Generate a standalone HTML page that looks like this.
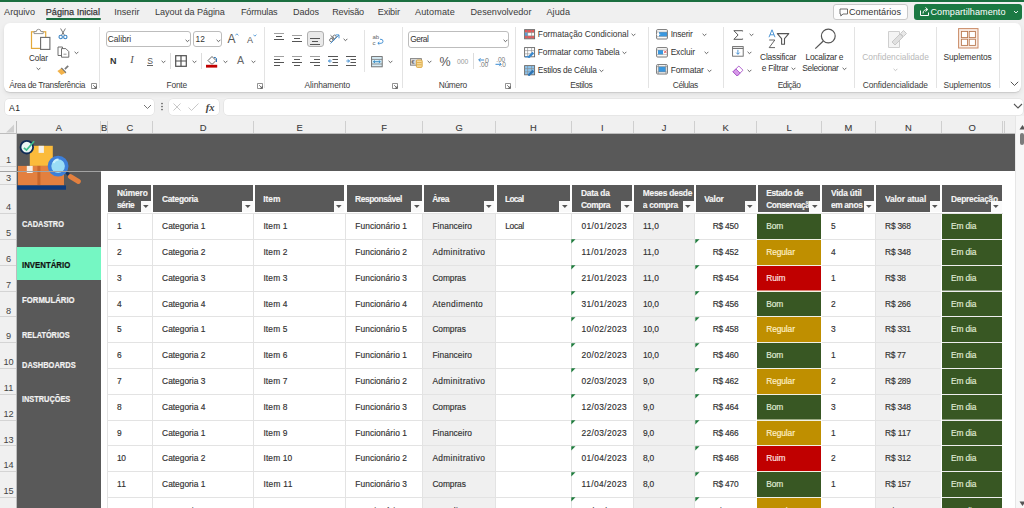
<!DOCTYPE html>
<html><head><meta charset="utf-8"><style>
html,body{margin:0;padding:0;}
body{width:1024px;height:508px;overflow:hidden;position:relative;background:#f0f0f0;font-family:"Liberation Sans", sans-serif;}
body>div,body>svg{position:absolute;}
</style></head><body>
<div style="left:0.00px;top:0.00px;width:1024.00px;height:1.70px;background:#1b6f40;"></div><div style="left:4.10px;top:7.00px;font-size:9.1px;line-height:10px;color:#3b3b3b;font-weight:normal;white-space:nowrap;letter-spacing:0.008px;">Arquivo</div><div style="left:45.80px;top:7.00px;font-size:9.1px;line-height:10px;color:#3b3b3b;font-weight:normal;white-space:nowrap;letter-spacing:0.004px;-webkit-text-stroke:0.25px #333;">Página Inicial</div><div style="left:114.20px;top:7.00px;font-size:9.1px;line-height:10px;color:#3b3b3b;font-weight:normal;white-space:nowrap;letter-spacing:0.000px;">Inserir</div><div style="left:155.00px;top:7.00px;font-size:9.1px;line-height:10px;color:#3b3b3b;font-weight:normal;white-space:nowrap;letter-spacing:-0.059px;">Layout da Página</div><div style="left:240.90px;top:7.00px;font-size:9.1px;line-height:10px;color:#3b3b3b;font-weight:normal;white-space:nowrap;letter-spacing:-0.164px;">Fórmulas</div><div style="left:292.90px;top:7.00px;font-size:9.1px;line-height:10px;color:#3b3b3b;font-weight:normal;white-space:nowrap;letter-spacing:-0.050px;">Dados</div><div style="left:332.20px;top:7.00px;font-size:9.1px;line-height:10px;color:#3b3b3b;font-weight:normal;white-space:nowrap;letter-spacing:-0.149px;">Revisão</div><div style="left:377.80px;top:7.00px;font-size:9.1px;line-height:10px;color:#3b3b3b;font-weight:normal;white-space:nowrap;letter-spacing:-0.110px;">Exibir</div><div style="left:415.00px;top:7.00px;font-size:9.1px;line-height:10px;color:#3b3b3b;font-weight:normal;white-space:nowrap;letter-spacing:0.122px;">Automate</div><div style="left:470.50px;top:7.00px;font-size:9.1px;line-height:10px;color:#3b3b3b;font-weight:normal;white-space:nowrap;letter-spacing:0.025px;">Desenvolvedor</div><div style="left:546.50px;top:7.00px;font-size:9.1px;line-height:10px;color:#3b3b3b;font-weight:normal;white-space:nowrap;letter-spacing:0.051px;">Ajuda</div><div style="left:45.80px;top:17.80px;width:55.00px;height:1.80px;background:#1b6f40;border-radius:1px;"></div><div style="left:832.50px;top:3.50px;width:75.00px;height:16.50px;background:#fdfdfd;border:1px solid #c9c9c9;border-radius:3px;box-sizing:border-box;"></div><svg style="left:838.50px;top:7.50px;" width="10" height="10" viewBox="0 0 10 10"><path d="M1 1h7.5v5h-4.5l-2.2 2v-2h-0.8z" fill="none" stroke="#555" stroke-width="0.85"/></svg><div style="left:849.00px;top:7.00px;font-size:9.1px;line-height:10px;color:#333;font-weight:normal;white-space:nowrap;letter-spacing:0.040px;">Comentários</div><div style="left:913.50px;top:3.50px;width:108.30px;height:16.50px;background:#1b7943;border-radius:3px;"></div><svg style="left:919.00px;top:6.00px;" width="11" height="11" viewBox="0 0 11 11"><path d="M1.5 4.5v5h8v-3" fill="none" stroke="#fff" stroke-width="1"/><path d="M4 7.5c0-3 2-4 4.5-4M6.5 1.5l2.3 2-2.3 2" fill="none" stroke="#fff" stroke-width="1"/></svg><div style="left:930.50px;top:7.00px;font-size:9.1px;line-height:10px;color:#fff;font-weight:normal;white-space:nowrap;letter-spacing:0.044px;">Compartilhamento</div><svg style="left:1012.50px;top:10.00px;" width="6" height="4" viewBox="0 0 6 4"><path d="M1 1l2 2 2-2" fill="none" stroke="#fff" stroke-width="0.9"/></svg><div style="left:4.20px;top:22.60px;width:1016.60px;height:69.10px;background:#ffffff;border-radius:6px;box-shadow:0 1px 1px rgba(0,0,0,0.10),0 2px 5px rgba(0,0,0,0.08);"></div><div style="left:98.70px;top:26.50px;width:1.00px;height:61.00px;background:#e3e3e3;"></div><div style="left:263.80px;top:26.50px;width:1.00px;height:61.00px;background:#e3e3e3;"></div><div style="left:402.00px;top:26.50px;width:1.00px;height:61.00px;background:#e3e3e3;"></div><div style="left:514.60px;top:26.50px;width:1.00px;height:61.00px;background:#e3e3e3;"></div><div style="left:648.30px;top:26.50px;width:1.00px;height:61.00px;background:#e3e3e3;"></div><div style="left:723.00px;top:26.50px;width:1.00px;height:61.00px;background:#e3e3e3;"></div><div style="left:854.00px;top:26.50px;width:1.00px;height:61.00px;background:#e3e3e3;"></div><div style="left:936.20px;top:26.50px;width:1.00px;height:61.00px;background:#e3e3e3;"></div><div style="left:999.00px;top:26.50px;width:1.00px;height:61.00px;background:#e3e3e3;"></div><div style="left:9.20px;top:80.00px;font-size:8.4px;line-height:10px;color:#3c3c3c;font-weight:normal;white-space:nowrap;letter-spacing:-0.310px;">Área de Transferência</div><div style="left:166.50px;top:80.00px;font-size:8.4px;line-height:10px;color:#3c3c3c;font-weight:normal;white-space:nowrap;letter-spacing:-0.191px;">Fonte</div><div style="left:304.60px;top:80.00px;font-size:8.4px;line-height:10px;color:#3c3c3c;font-weight:normal;white-space:nowrap;letter-spacing:-0.090px;">Alinhamento</div><div style="left:438.70px;top:80.00px;font-size:8.4px;line-height:10px;color:#3c3c3c;font-weight:normal;white-space:nowrap;letter-spacing:-0.272px;">Número</div><div style="left:570.30px;top:80.00px;font-size:8.4px;line-height:10px;color:#3c3c3c;font-weight:normal;white-space:nowrap;letter-spacing:-0.390px;">Estilos</div><div style="left:672.80px;top:80.00px;font-size:8.4px;line-height:10px;color:#3c3c3c;font-weight:normal;white-space:nowrap;letter-spacing:-0.419px;">Células</div><div style="left:777.70px;top:80.00px;font-size:8.4px;line-height:10px;color:#3c3c3c;font-weight:normal;white-space:nowrap;letter-spacing:-0.481px;">Edição</div><div style="left:862.70px;top:80.00px;font-size:8.4px;line-height:10px;color:#3c3c3c;font-weight:normal;white-space:nowrap;letter-spacing:-0.080px;">Confidencialidade</div><div style="left:943.50px;top:80.00px;font-size:8.4px;line-height:10px;color:#3c3c3c;font-weight:normal;white-space:nowrap;letter-spacing:-0.151px;">Suplementos</div><svg style="left:30.00px;top:28.00px;" width="21" height="22" viewBox="0 0 21 22">
      <rect x="1.5" y="3.8" width="14.2" height="16.6" fill="#fff" stroke="#e3a93a" stroke-width="1.2"/>
      <path d="M4 5.6v-2h2.3a2.3 2.3 0 0 1 4.6 0h2.3v2z" fill="#fff" stroke="#8a8a8a" stroke-width="0.9"/>
      <rect x="10.6" y="9.4" width="9.3" height="12" fill="#fff" stroke="#6a6a6a" stroke-width="1.1"/></svg><div style="left:29.10px;top:54.00px;font-size:8.2px;line-height:9px;color:#333;font-weight:normal;white-space:nowrap;letter-spacing:-0.175px;">Colar</div><svg style="left:36.00px;top:67.30px;" width="5" height="4" viewBox="0 0 5 4"><path d="M0.6 0.8l1.9 1.9 1.9-1.9" fill="none" stroke="#555" stroke-width="0.9"/></svg><svg style="left:58.00px;top:28.00px;" width="10" height="12" viewBox="0 0 10 12">
      <path d="M2.6 0.5l3.8 6.6M7.4 0.5l-3.8 6.6" stroke="#6b6b6b" stroke-width="0.9" fill="none"/>
      <circle cx="2.7" cy="9" r="1.7" fill="none" stroke="#3f86c4" stroke-width="1.1"/>
      <circle cx="7.3" cy="9" r="1.7" fill="none" stroke="#3f86c4" stroke-width="1.1"/></svg><svg style="left:56.80px;top:45.80px;" width="13" height="12" viewBox="0 0 13 12">
      <path d="M1 1h4.5v8.5H1z" fill="#fff" stroke="#606060" stroke-width="0.9"/>
      <path d="M4.5 2.6h4.3l3 3v5.6h-7.3z" fill="#fff" stroke="#606060" stroke-width="0.9"/>
      <path d="M6.5 8.2h3" stroke="#808080" stroke-width="0.8"/></svg><svg style="left:74.00px;top:50.50px;" width="5" height="4" viewBox="0 0 5 4"><path d="M0.6 0.8l1.9 1.9 1.9-1.9" fill="none" stroke="#555" stroke-width="0.9"/></svg><svg style="left:56.50px;top:63.50px;" width="13" height="12" viewBox="0 0 13 12">
      <path d="M7.3 4.6l3.3-3.3 1.2 1.2-3.3 3.3z" fill="#7a7a7a"/>
      <path d="M4.8 3.6l4.6 4.6-1.2 1.2-4.6-4.6z" fill="#707070"/>
      <path d="M4.2 4.6l4.2 4.2-4 2.2-4-4z" fill="#f2b24a"/></svg><svg style="left:91.00px;top:82.50px;" width="6" height="6" viewBox="0 0 6 6"><path d="M0.5 0.5h5v5h-5z" fill="none" stroke="#777" stroke-width="0.8"/><path d="M2.2 2.2l3 3M3 5.2h2.2V3" fill="none" stroke="#555" stroke-width="0.8"/></svg><div style="left:105.90px;top:31.00px;width:84.80px;height:16.40px;background:#fff;border:1px solid #bdbdbd;border-radius:3px;box-sizing:border-box;"></div><div style="left:107.80px;top:34.00px;font-size:8.4px;line-height:10px;color:#333;font-weight:normal;white-space:nowrap;letter-spacing:-0.069px;">Calibri</div><svg style="left:184.50px;top:38.50px;" width="5" height="4" viewBox="0 0 5 4"><path d="M0.6 0.8l1.9 1.9 1.9-1.9" fill="none" stroke="#555" stroke-width="0.9"/></svg><div style="left:193.00px;top:31.00px;width:29.40px;height:16.40px;background:#fff;border:1px solid #bdbdbd;border-radius:3px;box-sizing:border-box;"></div><div style="left:195.50px;top:34.00px;font-size:8.4px;line-height:10px;color:#333;font-weight:normal;white-space:nowrap;">12</div><svg style="left:216.00px;top:38.50px;" width="5" height="4" viewBox="0 0 5 4"><path d="M0.6 0.8l1.9 1.9 1.9-1.9" fill="none" stroke="#555" stroke-width="0.9"/></svg><div style="left:227.50px;top:32.00px;font-size:12px;line-height:14px;color:#555;font-weight:normal;white-space:nowrap;">A</div><svg style="left:235.00px;top:33.30px;" width="4" height="3" viewBox="0 0 4 3"><path d="M0.4 2.4l1.5-1.6 1.5 1.6" fill="none" stroke="#3a8ad0" stroke-width="0.8"/></svg><div style="left:247.00px;top:35.00px;font-size:9px;line-height:10px;color:#555;font-weight:normal;white-space:nowrap;">A</div><svg style="left:253.00px;top:34.00px;" width="4" height="3" viewBox="0 0 4 3"><path d="M0.4 0.6l1.5 1.6 1.5-1.6" fill="none" stroke="#3a8ad0" stroke-width="0.8"/></svg><div style="left:110.00px;top:56.00px;font-size:9.0px;line-height:10px;color:#333;font-weight:bold;white-space:nowrap;">N</div><div style="left:130.20px;top:54.00px;font-size:10.5px;line-height:12px;color:#555;font-weight:normal;white-space:nowrap;font-family:'Liberation Serif',serif;font-style:italic;">I</div><div style="left:147.20px;top:56.00px;font-size:8.6px;line-height:10px;color:#555;font-weight:normal;white-space:nowrap;">S</div><div style="left:147.00px;top:65.20px;width:6.00px;height:0.90px;background:#666;"></div><svg style="left:160.80px;top:60.00px;" width="5" height="4" viewBox="0 0 5 4"><path d="M0.6 0.8l1.9 1.9 1.9-1.9" fill="none" stroke="#555" stroke-width="0.9"/></svg><div style="left:170.30px;top:53.00px;width:0.80px;height:16.30px;background:#dcdcdc;"></div><svg style="left:174.60px;top:55.30px;" width="12" height="12" viewBox="0 0 12 12"><rect x="0.7" y="0.7" width="10.6" height="10.6" fill="none" stroke="#505050" stroke-width="1.2"/><path d="M6 0.7v10.6M0.7 6h10.6" stroke="#505050" stroke-width="1.2"/></svg><svg style="left:191.80px;top:60.00px;" width="5" height="4" viewBox="0 0 5 4"><path d="M0.6 0.8l1.9 1.9 1.9-1.9" fill="none" stroke="#555" stroke-width="0.9"/></svg><div style="left:201.30px;top:53.00px;width:0.80px;height:16.30px;background:#dcdcdc;"></div><svg style="left:206.00px;top:54.50px;" width="12" height="13" viewBox="0 0 12 13">
      <path d="M2 5.5l4-4 4 4-3.5 3.5h-1z" fill="#fff" stroke="#555" stroke-width="0.9"/>
      <path d="M8 2.5a2 2 0 0 1 2.5 2.5v2" fill="none" stroke="#2e75b6" stroke-width="1"/>
      <rect x="0" y="9.8" width="11.2" height="2.8" fill="#c00000"/></svg><svg style="left:222.60px;top:60.00px;" width="5" height="4" viewBox="0 0 5 4"><path d="M0.6 0.8l1.9 1.9 1.9-1.9" fill="none" stroke="#555" stroke-width="0.9"/></svg><div style="left:237.00px;top:54.00px;font-size:10.6px;line-height:12px;color:#666;font-weight:normal;white-space:nowrap;">A</div><svg style="left:251.00px;top:60.00px;" width="5" height="4" viewBox="0 0 5 4"><path d="M0.6 0.8l1.9 1.9 1.9-1.9" fill="none" stroke="#555" stroke-width="0.9"/></svg><svg style="left:256.50px;top:82.50px;" width="6" height="6" viewBox="0 0 6 6"><path d="M0.5 0.5h5v5h-5z" fill="none" stroke="#777" stroke-width="0.8"/><path d="M2.2 2.2l3 3M3 5.2h2.2V3" fill="none" stroke="#555" stroke-width="0.8"/></svg><svg style="left:274.00px;top:33.00px;" width="12" height="12" viewBox="0 0 12 12"><path d="M0 0.5h10" stroke="#a0a0a0" stroke-width="1"/><path d="M2 3.5h6" stroke="#555555" stroke-width="1"/><path d="M0 6.5h10" stroke="#555555" stroke-width="1"/></svg><svg style="left:292.00px;top:35.00px;" width="12" height="12" viewBox="0 0 12 12"><path d="M0 0.5h10" stroke="#a0a0a0" stroke-width="1"/><path d="M2 3.5h6" stroke="#555555" stroke-width="1"/><path d="M0 6.5h10" stroke="#555555" stroke-width="1"/></svg><div style="left:306.50px;top:30.80px;width:17.00px;height:16.50px;background:#e9e9e9;border:1px solid #b0b0b0;border-radius:3px;box-sizing:border-box;"></div><svg style="left:310.00px;top:38.00px;" width="12" height="12" viewBox="0 0 12 12"><path d="M0 0.5h10" stroke="#555555" stroke-width="1"/><path d="M2 3.5h6" stroke="#555555" stroke-width="1"/><path d="M0 6.5h10" stroke="#555555" stroke-width="1"/></svg><svg style="left:327.00px;top:32.00px;" width="14" height="13" viewBox="0 0 14 13">
      <g transform="rotate(-45 5 6)" fill="none" stroke="#6a6a6a" stroke-width="0.9">
        <circle cx="3" cy="7" r="1.7"/><path d="M4.7 5.2v3.6"/>
        <circle cx="7.6" cy="7" r="1.7"/><path d="M5.9 3v5.8"/>
      </g>
      <path d="M3.5 11.5l8.3-8.3M8.6 2.9h3.4v3.4" fill="none" stroke="#3a8ad0" stroke-width="0.9"/></svg><svg style="left:342.80px;top:38.00px;" width="5" height="4" viewBox="0 0 5 4"><path d="M0.6 0.8l1.9 1.9 1.9-1.9" fill="none" stroke="#555" stroke-width="0.9"/></svg><svg style="left:274.00px;top:56.00px;" width="12" height="12" viewBox="0 0 12 12"><path d="M0 0.5h10" stroke="#a0a0a0" stroke-width="1"/><path d="M0 3.5h6" stroke="#555555" stroke-width="1"/><path d="M0 6.5h10" stroke="#555555" stroke-width="1"/><path d="M0 9.5h6" stroke="#555555" stroke-width="1"/></svg><svg style="left:292.00px;top:56.00px;" width="12" height="12" viewBox="0 0 12 12"><path d="M0 0.5h10" stroke="#a0a0a0" stroke-width="1"/><path d="M2 3.5h6" stroke="#555555" stroke-width="1"/><path d="M0 6.5h10" stroke="#555555" stroke-width="1"/><path d="M2 9.5h6" stroke="#555555" stroke-width="1"/></svg><svg style="left:310.00px;top:56.00px;" width="12" height="12" viewBox="0 0 12 12"><path d="M0 0.5h10" stroke="#a0a0a0" stroke-width="1"/><path d="M4 3.5h6" stroke="#555555" stroke-width="1"/><path d="M0 6.5h10" stroke="#555555" stroke-width="1"/><path d="M4 9.5h6" stroke="#555555" stroke-width="1"/></svg><svg style="left:328.00px;top:56.00px;" width="12" height="12" viewBox="0 0 12 12"><path d="M0 0.5h10M4.5 3.5h5.5M4.5 6.5h5.5M0 9.5h10" stroke="#555555" stroke-width="1"/>
      <path d="M3.6 5h-3M2 3.4L0.5 5 2 6.6" fill="none" stroke="#3a8ad0" stroke-width="1"/></svg><svg style="left:346.00px;top:56.00px;" width="12" height="12" viewBox="0 0 12 12"><path d="M0 0.5h10M4.5 3.5h5.5M4.5 6.5h5.5M0 9.5h10" stroke="#555555" stroke-width="1"/>
      <path d="M0.4 5h3M2 3.4L3.5 5 2 6.6" fill="none" stroke="#3a8ad0" stroke-width="1"/></svg><div style="left:364.30px;top:30.00px;width:0.80px;height:42.00px;background:#e3e3e3;"></div><svg style="left:372.00px;top:33.50px;" width="12" height="12" viewBox="0 0 12 12">
      <text x="0.5" y="5.2" font-size="6" fill="#666" font-family="Liberation Sans">ab</text>
      <text x="0.5" y="10.5" font-size="6" fill="#666" font-family="Liberation Sans">c</text>
      <path d="M6 9.3h3a2 2 0 0 0 0-4h-1M7.3 8l-1.5 1.3 1.5 1.3" fill="none" stroke="#3a8ad0" stroke-width="0.9"/></svg><svg style="left:371.00px;top:55.50px;" width="12" height="12" viewBox="0 0 12 12">
      <rect x="0.6" y="0.6" width="10.6" height="10.2" fill="#d8eef8" stroke="#666" stroke-width="0.9"/>
      <path d="M0.6 3.4h10.6M0.6 8h10.6" stroke="#777" stroke-width="0.8"/>
      <path d="M2.5 5.7h6.8M4 4.5l-1.5 1.2 1.5 1.2M7.8 4.5l1.5 1.2-1.5 1.2" fill="none" stroke="#2e86c1" stroke-width="0.9"/></svg><svg style="left:388.00px;top:60.30px;" width="5" height="4" viewBox="0 0 5 4"><path d="M0.6 0.8l1.9 1.9 1.9-1.9" fill="none" stroke="#555" stroke-width="0.9"/></svg><svg style="left:392.30px;top:82.50px;" width="6" height="6" viewBox="0 0 6 6"><path d="M0.5 0.5h5v5h-5z" fill="none" stroke="#777" stroke-width="0.8"/><path d="M2.2 2.2l3 3M3 5.2h2.2V3" fill="none" stroke="#555" stroke-width="0.8"/></svg><div style="left:408.10px;top:31.00px;width:101.40px;height:16.60px;background:#fff;border:1px solid #bdbdbd;border-radius:3px;box-sizing:border-box;"></div><div style="left:410.30px;top:34.00px;font-size:8.4px;line-height:10px;color:#333;font-weight:normal;white-space:nowrap;letter-spacing:-0.510px;">Geral</div><svg style="left:503.00px;top:38.50px;" width="5" height="4" viewBox="0 0 5 4"><path d="M0.6 0.8l1.9 1.9 1.9-1.9" fill="none" stroke="#555" stroke-width="0.9"/></svg><svg style="left:410.00px;top:57.50px;" width="13" height="10" viewBox="0 0 13 10">
      <rect x="0.4" y="0.6" width="11" height="6.6" fill="#d8d8d8" stroke="#777" stroke-width="0.8"/>
      <text x="1.5" y="6" font-size="5.5" fill="#555" font-family="Liberation Sans">€</text>
      <rect x="6.4" y="2" width="5.8" height="7.4" rx="1" fill="#f8dc9c" stroke="#d69a2a" stroke-width="0.8"/>
      <path d="M7 4.6h4.6M7 6.8h4.6" stroke="#d69a2a" stroke-width="0.7"/></svg><svg style="left:426.80px;top:60.00px;" width="5" height="4" viewBox="0 0 5 4"><path d="M0.6 0.8l1.9 1.9 1.9-1.9" fill="none" stroke="#555" stroke-width="0.9"/></svg><div style="left:439.40px;top:55.00px;font-size:12.5px;line-height:14px;color:#555;font-weight:normal;white-space:nowrap;">%</div><div style="left:457.10px;top:58.00px;font-size:6.8px;line-height:7px;color:#9a9a9a;font-weight:normal;white-space:nowrap;letter-spacing:-0.028px;">000</div><div style="left:473.00px;top:53.20px;width:0.80px;height:16.00px;background:#dcdcdc;"></div><svg style="left:477.50px;top:55.50px;" width="13" height="12" viewBox="0 0 13 12">
      <path d="M6.2 4h-5.4M2.5 2.2L0.7 4l1.8 1.8" fill="none" stroke="#3a8ad0" stroke-width="1"/>
      <text x="7" y="7" font-size="7" fill="#777" font-family="Liberation Sans">0</text>
      <text x="1.2" y="11.2" font-size="6.5" fill="#777" font-family="Liberation Sans">.00</text></svg><svg style="left:495.30px;top:55.50px;" width="13" height="12" viewBox="0 0 13 12">
      <text x="1.2" y="6" font-size="6.5" fill="#777" font-family="Liberation Sans">.00</text>
      <path d="M0.5 8.3h5.6M4.3 6.5l1.8 1.8-1.8 1.8" fill="none" stroke="#3a8ad0" stroke-width="1"/>
      <text x="5.5" y="11.2" font-size="6.5" fill="#777" font-family="Liberation Sans">.0</text></svg><svg style="left:505.00px;top:82.50px;" width="6" height="6" viewBox="0 0 6 6"><path d="M0.5 0.5h5v5h-5z" fill="none" stroke="#777" stroke-width="0.8"/><path d="M2.2 2.2l3 3M3 5.2h2.2V3" fill="none" stroke="#555" stroke-width="0.8"/></svg><svg style="left:524.00px;top:28.50px;" width="12" height="11" viewBox="0 0 12 11"><rect x="1" y="1" width="9.4" height="2.6" fill="#e85a5a"/><rect x="1" y="7" width="9.4" height="2.6" fill="#e85a5a"/><rect x="1" y="3.6" width="2.6" height="3.4" fill="#5aa0e0"/><rect x="0.6" y="0.6" width="10" height="9.2" fill="none" stroke="#666" stroke-width="0.9"/><path d="M3.6 0.6v9.2M7.6 0.6v9.2M0.6 3.6h10M0.6 6.8h10" stroke="#888" stroke-width="0.6"/></svg><svg style="left:524.00px;top:46.80px;" width="12" height="11" viewBox="0 0 12 11"><rect x="0.6" y="0.6" width="10" height="9.2" fill="none" stroke="#666" stroke-width="0.9"/><path d="M3.6 0.6v9.2M7.6 0.6v9.2M0.6 3.6h10M0.6 6.8h10" stroke="#888" stroke-width="0.6"/><path d="M3.5 9.8l5-5 1.6 1.6-5 5z" fill="#3a8ad0"/><path d="M1 9.8h4" stroke="#3a8ad0" stroke-width="1.2"/></svg><svg style="left:524.00px;top:64.60px;" width="12" height="11" viewBox="0 0 12 11"><rect x="1" y="1" width="9.4" height="8.6" fill="#8cc4ee"/><rect x="0.6" y="0.6" width="10" height="9.2" fill="none" stroke="#666" stroke-width="0.9"/><path d="M3.6 0.6v9.2M7.6 0.6v9.2M0.6 3.6h10M0.6 6.8h10" stroke="#888" stroke-width="0.6"/><path d="M3.5 9.8l5-5 1.6 1.6-5 5z" fill="#2e75b6"/></svg><div style="left:537.80px;top:29.00px;font-size:8.4px;line-height:10px;color:#333;font-weight:normal;white-space:nowrap;letter-spacing:0.002px;">Formatação Condicional</div><svg style="left:630.80px;top:33.30px;" width="5" height="4" viewBox="0 0 5 4"><path d="M0.6 0.8l1.9 1.9 1.9-1.9" fill="none" stroke="#555" stroke-width="0.9"/></svg><div style="left:537.80px;top:47.00px;font-size:8.4px;line-height:10px;color:#333;font-weight:normal;white-space:nowrap;letter-spacing:-0.090px;">Formatar como Tabela</div><svg style="left:621.50px;top:51.10px;" width="5" height="4" viewBox="0 0 5 4"><path d="M0.6 0.8l1.9 1.9 1.9-1.9" fill="none" stroke="#555" stroke-width="0.9"/></svg><div style="left:537.80px;top:65.00px;font-size:8.4px;line-height:10px;color:#333;font-weight:normal;white-space:nowrap;letter-spacing:-0.211px;">Estilos de Célula</div><svg style="left:599.20px;top:69.00px;" width="5" height="4" viewBox="0 0 5 4"><path d="M0.6 0.8l1.9 1.9 1.9-1.9" fill="none" stroke="#555" stroke-width="0.9"/></svg><svg style="left:656.00px;top:28.50px;" width="13" height="11" viewBox="0 0 13 11"><rect x="3" y="3" width="8" height="4.6" fill="#3a98e0"/><rect x="0.6" y="0.6" width="10.8" height="9.4" rx="1" fill="none" stroke="#666" stroke-width="0.9"/><path d="M0.6 3h10.8M0.6 7.6h10.8" stroke="#999" stroke-width="0.6"/><path d="M4.2 5.3h-3M2.2 4l-1.2 1.3 1.2 1.3" fill="none" stroke="#fff" stroke-width="0.8"/></svg><svg style="left:656.00px;top:46.80px;" width="13" height="11" viewBox="0 0 13 11"><rect x="2" y="3" width="5" height="4.6" fill="#3a98e0"/><rect x="0.6" y="0.6" width="10.8" height="9.4" rx="1" fill="none" stroke="#666" stroke-width="0.9"/><path d="M0.6 3h10.8M0.6 7.6h10.8" stroke="#999" stroke-width="0.6"/><path d="M8 3.6l2.6 2.6M10.6 3.6L8 6.2" stroke="#e03a3a" stroke-width="0.8"/></svg><svg style="left:656.00px;top:64.40px;" width="13" height="11" viewBox="0 0 13 11"><rect x="2.4" y="2.6" width="7.4" height="5.4" fill="#3a98e0"/><rect x="0.6" y="0.6" width="10.8" height="9.4" rx="1" fill="none" stroke="#666" stroke-width="0.9"/><path d="M2.4 0.6v9.4M9.8 0.6v9.4M0.6 2.6h10.8M0.6 8h10.8" stroke="#888" stroke-width="0.6"/></svg><div style="left:670.70px;top:29.00px;font-size:8.4px;line-height:10px;color:#333;font-weight:normal;white-space:nowrap;letter-spacing:-0.192px;">Inserir</div><svg style="left:701.50px;top:33.30px;" width="5" height="4" viewBox="0 0 5 4"><path d="M0.6 0.8l1.9 1.9 1.9-1.9" fill="none" stroke="#555" stroke-width="0.9"/></svg><div style="left:670.70px;top:47.00px;font-size:8.4px;line-height:10px;color:#333;font-weight:normal;white-space:nowrap;letter-spacing:-0.150px;">Excluir</div><svg style="left:703.50px;top:51.10px;" width="5" height="4" viewBox="0 0 5 4"><path d="M0.6 0.8l1.9 1.9 1.9-1.9" fill="none" stroke="#555" stroke-width="0.9"/></svg><div style="left:670.70px;top:65.00px;font-size:8.4px;line-height:10px;color:#333;font-weight:normal;white-space:nowrap;letter-spacing:-0.137px;">Formatar</div><svg style="left:706.50px;top:69.00px;" width="5" height="4" viewBox="0 0 5 4"><path d="M0.6 0.8l1.9 1.9 1.9-1.9" fill="none" stroke="#555" stroke-width="0.9"/></svg><svg style="left:732.50px;top:29.50px;" width="11" height="10" viewBox="0 0 11 10"><path d="M9.6 1.4V0.7H0.9l4.2 4.3-4.2 4.3h8.7V8.6" fill="none" stroke="#555" stroke-width="1"/></svg><svg style="left:748.50px;top:33.00px;" width="5" height="4" viewBox="0 0 5 4"><path d="M0.6 0.8l1.9 1.9 1.9-1.9" fill="none" stroke="#555" stroke-width="0.9"/></svg><svg style="left:731.80px;top:46.30px;" width="12" height="11" viewBox="0 0 12 11"><rect x="0.6" y="0.6" width="10.6" height="9.6" fill="#fff" stroke="#666" stroke-width="0.9"/><path d="M0.6 2.4h10.6" stroke="#666" stroke-width="1"/><path d="M5.9 3.8v4.4M4.2 6.6l1.7 1.7 1.7-1.7" fill="none" stroke="#3a8ad0" stroke-width="0.9"/></svg><svg style="left:747.00px;top:51.10px;" width="5" height="4" viewBox="0 0 5 4"><path d="M0.6 0.8l1.9 1.9 1.9-1.9" fill="none" stroke="#555" stroke-width="0.9"/></svg><svg style="left:731.80px;top:64.60px;" width="12" height="11" viewBox="0 0 12 11"><path d="M1 6.8l5.8-5.8 4.2 4.2-5.8 5.8z" fill="#fff" stroke="#a855c8" stroke-width="0.9"/><path d="M1 6.8l2.9-2.9 4.2 4.2-2.9 2.9z" fill="#d79ae8" stroke="#a855c8" stroke-width="0.9"/></svg><svg style="left:747.00px;top:69.00px;" width="5" height="4" viewBox="0 0 5 4"><path d="M0.6 0.8l1.9 1.9 1.9-1.9" fill="none" stroke="#555" stroke-width="0.9"/></svg><svg style="left:768.00px;top:29.00px;" width="23" height="20" viewBox="0 0 23 20">
      <path d="M1 8.2l3-7.4 3 7.4M2 5.8h4" fill="none" stroke="#3a8ad0" stroke-width="0.9"/>
      <path d="M1.2 11h5.6l-5.6 7.6h5.8" fill="none" stroke="#555" stroke-width="0.9"/>
      <path d="M9.3 4.6h11.5l-4.3 5v5.6h-2.9v-5.6z" fill="none" stroke="#555" stroke-width="1.1" stroke-linejoin="round"/></svg><div style="left:760.10px;top:52.00px;font-size:8.4px;line-height:10px;color:#333;font-weight:normal;white-space:nowrap;letter-spacing:-0.242px;">Classificar</div><div style="left:761.70px;top:63.00px;font-size:8.4px;line-height:10px;color:#333;font-weight:normal;white-space:nowrap;letter-spacing:-0.197px;">e Filtrar</div><svg style="left:791.30px;top:67.00px;" width="5" height="4" viewBox="0 0 5 4"><path d="M0.6 0.8l1.9 1.9 1.9-1.9" fill="none" stroke="#555" stroke-width="0.9"/></svg><svg style="left:813.50px;top:28.00px;" width="24" height="22" viewBox="0 0 24 22"><circle cx="14.3" cy="8" r="6.9" fill="none" stroke="#555" stroke-width="1.2"/><path d="M9.3 13l-8 7.6" stroke="#555" stroke-width="1.2"/></svg><div style="left:805.50px;top:52.00px;font-size:8.4px;line-height:10px;color:#333;font-weight:normal;white-space:nowrap;letter-spacing:-0.251px;">Localizar e</div><div style="left:802.30px;top:63.00px;font-size:8.4px;line-height:10px;color:#333;font-weight:normal;white-space:nowrap;letter-spacing:-0.332px;">Selecionar</div><svg style="left:841.80px;top:67.00px;" width="5" height="4" viewBox="0 0 5 4"><path d="M0.6 0.8l1.9 1.9 1.9-1.9" fill="none" stroke="#555" stroke-width="0.9"/></svg><svg style="left:887.00px;top:27.00px;" width="21" height="22" viewBox="0 0 21 22">
      <path d="M1.5 4.5h11v16h-11z" fill="#f4f4f4" stroke="#cfcfcf" stroke-width="1"/>
      <path d="M5 15l8-8 3 3-8 8z" fill="#e0e0e0" stroke="#c4c4c4" stroke-width="0.9"/>
      <path d="M13.5 6.5l3-3 3 3-3 3z" fill="#e8e8e8" stroke="#c4c4c4" stroke-width="0.9"/></svg><div style="left:862.20px;top:52.00px;font-size:8.4px;line-height:10px;color:#b8b8b8;font-weight:normal;white-space:nowrap;letter-spacing:0.001px;">Confidencialidade</div><svg style="left:893.00px;top:67.50px;" width="5" height="4" viewBox="0 0 5 4"><path d="M0.6 0.8l1.9 1.9 1.9-1.9" fill="none" stroke="#c0c0c0" stroke-width="0.9"/></svg><svg style="left:957.50px;top:27.80px;" width="21" height="21" viewBox="0 0 21 21">
      <rect x="0.6" y="0.6" width="19.4" height="19.4" fill="#fbeee6" stroke="#c98a66" stroke-width="1"/>
      <rect x="3.4" y="3.4" width="6.2" height="6.2" fill="#fff" stroke="#b9784f" stroke-width="0.9"/>
      <rect x="11.2" y="3.4" width="6.2" height="6.2" fill="#fff" stroke="#b9784f" stroke-width="0.9"/>
      <rect x="3.4" y="11.2" width="6.2" height="6.2" fill="#fff" stroke="#b9784f" stroke-width="0.9"/>
      <rect x="11.2" y="11.2" width="6.2" height="6.2" fill="#fff" stroke="#b9784f" stroke-width="0.9"/></svg><div style="left:943.50px;top:52.00px;font-size:8.4px;line-height:10px;color:#333;font-weight:normal;white-space:nowrap;letter-spacing:-0.061px;">Suplementos</div><svg style="left:1010.00px;top:80.50px;" width="9" height="6" viewBox="0 0 9 6"><path d="M0.8 0.8l3.7 3.7 3.7-3.7" fill="none" stroke="#555" stroke-width="1"/></svg><div style="left:4.70px;top:98.70px;width:149.00px;height:16.60px;background:#ffffff;border-radius:4px;box-shadow:0 0 0 0.5px #dcdcdc;"></div><div style="left:9.00px;top:103.00px;font-size:8.6px;line-height:10px;color:#222;font-weight:normal;white-space:nowrap;letter-spacing:0.565px;">A1</div><svg style="left:142.50px;top:104.00px;" width="9" height="6" viewBox="0 0 9 6"><path d="M1 1l3.5 3.5L8 1" fill="none" stroke="#666" stroke-width="0.9"/></svg><svg style="left:159.50px;top:101.00px;" width="4" height="11" viewBox="0 0 4 11"><circle cx="2" cy="2.6" r="0.8" fill="#555"/><circle cx="2" cy="5.6" r="0.8" fill="#555"/><circle cx="2" cy="8.6" r="0.8" fill="#555"/></svg><div style="left:169.20px;top:98.70px;width:50.00px;height:16.60px;background:#ffffff;border-radius:4px;box-shadow:0 0 0 0.5px #dcdcdc;"></div><svg style="left:172.00px;top:102.00px;" width="11" height="10" viewBox="0 0 11 10"><path d="M1.5 1.5l7 7M8.5 1.5l-7 7" stroke="#c8c8c8" stroke-width="1"/></svg><svg style="left:187.00px;top:102.00px;" width="13" height="10" viewBox="0 0 13 10"><path d="M1.5 5.5l3 3 7-7" fill="none" stroke="#c8c8c8" stroke-width="1"/></svg><div style="left:205.80px;top:102.00px;font-size:10.5px;line-height:12px;color:#444;font-weight:bold;white-space:nowrap;font-family:'Liberation Serif',serif;"><i>fx</i></div><div style="left:223.80px;top:98.70px;width:799.50px;height:16.60px;background:#ffffff;border-radius:4px;box-shadow:0 0 0 0.5px #dcdcdc;"></div><svg style="left:1013.00px;top:103.00px;" width="10" height="6" viewBox="0 0 10 6"><path d="M1 1l4 4 4-4" fill="none" stroke="#555" stroke-width="1.1"/></svg><div style="left:55.70px;top:122.00px;font-size:9.4px;line-height:11px;color:#3a3a3a;font-weight:normal;white-space:nowrap;-webkit-text-stroke:0.1px;">A</div><div style="left:100.92px;top:122.00px;font-size:9.4px;line-height:11px;color:#3a3a3a;font-weight:normal;white-space:nowrap;-webkit-text-stroke:0.1px;">B</div><div style="left:126.57px;top:122.00px;font-size:9.4px;line-height:11px;color:#3a3a3a;font-weight:normal;white-space:nowrap;-webkit-text-stroke:0.1px;">C</div><div style="left:199.77px;top:122.00px;font-size:9.4px;line-height:11px;color:#3a3a3a;font-weight:normal;white-space:nowrap;-webkit-text-stroke:0.1px;">D</div><div style="left:296.57px;top:122.00px;font-size:9.4px;line-height:11px;color:#3a3a3a;font-weight:normal;white-space:nowrap;-webkit-text-stroke:0.1px;">E</div><div style="left:381.33px;top:122.00px;font-size:9.4px;line-height:11px;color:#3a3a3a;font-weight:normal;white-space:nowrap;-webkit-text-stroke:0.1px;">F</div><div style="left:455.53px;top:122.00px;font-size:9.4px;line-height:11px;color:#3a3a3a;font-weight:normal;white-space:nowrap;-webkit-text-stroke:0.1px;">G</div><div style="left:530.12px;top:122.00px;font-size:9.4px;line-height:11px;color:#3a3a3a;font-weight:normal;white-space:nowrap;-webkit-text-stroke:0.1px;">H</div><div style="left:601.03px;top:122.00px;font-size:9.4px;line-height:11px;color:#3a3a3a;font-weight:normal;white-space:nowrap;-webkit-text-stroke:0.1px;">I</div><div style="left:661.65px;top:122.00px;font-size:9.4px;line-height:11px;color:#3a3a3a;font-weight:normal;white-space:nowrap;-webkit-text-stroke:0.1px;">J</div><div style="left:722.57px;top:122.00px;font-size:9.4px;line-height:11px;color:#3a3a3a;font-weight:normal;white-space:nowrap;-webkit-text-stroke:0.1px;">K</div><div style="left:786.44px;top:122.00px;font-size:9.4px;line-height:11px;color:#3a3a3a;font-weight:normal;white-space:nowrap;-webkit-text-stroke:0.1px;">L</div><div style="left:844.53px;top:122.00px;font-size:9.4px;line-height:11px;color:#3a3a3a;font-weight:normal;white-space:nowrap;-webkit-text-stroke:0.1px;">M</div><div style="left:905.12px;top:122.00px;font-size:9.4px;line-height:11px;color:#3a3a3a;font-weight:normal;white-space:nowrap;-webkit-text-stroke:0.1px;">N</div><div style="left:968.43px;top:122.00px;font-size:9.4px;line-height:11px;color:#3a3a3a;font-weight:normal;white-space:nowrap;-webkit-text-stroke:0.1px;">O</div><div style="left:100.20px;top:121.00px;width:1.00px;height:12.50px;background:#cfcfcf;"></div><div style="left:106.90px;top:121.00px;width:1.00px;height:12.50px;background:#cfcfcf;"></div><div style="left:152.00px;top:121.00px;width:1.00px;height:12.50px;background:#cfcfcf;"></div><div style="left:253.30px;top:121.00px;width:1.00px;height:12.50px;background:#cfcfcf;"></div><div style="left:345.10px;top:121.00px;width:1.00px;height:12.50px;background:#cfcfcf;"></div><div style="left:422.30px;top:121.00px;width:1.00px;height:12.50px;background:#cfcfcf;"></div><div style="left:495.10px;top:121.00px;width:1.00px;height:12.50px;background:#cfcfcf;"></div><div style="left:570.90px;top:121.00px;width:1.00px;height:12.50px;background:#cfcfcf;"></div><div style="left:632.80px;top:121.00px;width:1.00px;height:12.50px;background:#cfcfcf;"></div><div style="left:694.20px;top:121.00px;width:1.00px;height:12.50px;background:#cfcfcf;"></div><div style="left:756.20px;top:121.00px;width:1.00px;height:12.50px;background:#cfcfcf;"></div><div style="left:820.90px;top:121.00px;width:1.00px;height:12.50px;background:#cfcfcf;"></div><div style="left:875.00px;top:121.00px;width:1.00px;height:12.50px;background:#cfcfcf;"></div><div style="left:941.00px;top:121.00px;width:1.00px;height:12.50px;background:#cfcfcf;"></div><div style="left:1002.20px;top:121.00px;width:1.00px;height:12.50px;background:#cfcfcf;"></div><div style="left:1004.00px;top:121.00px;width:1.00px;height:12.50px;background:#cfcfcf;"></div><div style="left:0.00px;top:133.20px;width:1015.00px;height:0.80px;background:#bdbdbd;"></div><div style="left:16.20px;top:121.00px;width:0.80px;height:387.00px;background:#bdbdbd;"></div><svg style="left:5.00px;top:124.00px;" width="10" height="9" viewBox="0 0 10 9"><path d="M9 0.5v8h-8z" fill="#cfcfcf"/></svg><div style="left:0.00px;top:165.80px;width:16.20px;height:1.00px;background:#d4d4d4;"></div><div style="left:6.05px;top:155.00px;font-size:9.2px;line-height:10px;color:#444;font-weight:normal;white-space:nowrap;">1</div><div style="left:0.00px;top:170.50px;width:16.20px;height:1.00px;background:#d4d4d4;"></div><div style="left:0.00px;top:184.00px;width:16.20px;height:1.00px;background:#d4d4d4;"></div><div style="left:6.05px;top:173.00px;font-size:9.2px;line-height:10px;color:#444;font-weight:normal;white-space:nowrap;">3</div><div style="left:0.00px;top:213.20px;width:16.20px;height:1.00px;background:#d4d4d4;"></div><div style="left:6.05px;top:202.00px;font-size:9.2px;line-height:10px;color:#444;font-weight:normal;white-space:nowrap;">4</div><div style="left:0.00px;top:238.99px;width:16.20px;height:1.00px;background:#d4d4d4;"></div><div style="left:6.05px;top:228.00px;font-size:9.2px;line-height:10px;color:#444;font-weight:normal;white-space:nowrap;">5</div><div style="left:0.00px;top:264.78px;width:16.20px;height:1.00px;background:#d4d4d4;"></div><div style="left:6.05px;top:254.00px;font-size:9.2px;line-height:10px;color:#444;font-weight:normal;white-space:nowrap;">6</div><div style="left:0.00px;top:290.57px;width:16.20px;height:1.00px;background:#d4d4d4;"></div><div style="left:6.05px;top:280.00px;font-size:9.2px;line-height:10px;color:#444;font-weight:normal;white-space:nowrap;">7</div><div style="left:0.00px;top:316.36px;width:16.20px;height:1.00px;background:#d4d4d4;"></div><div style="left:6.05px;top:306.00px;font-size:9.2px;line-height:10px;color:#444;font-weight:normal;white-space:nowrap;">8</div><div style="left:0.00px;top:342.15px;width:16.20px;height:1.00px;background:#d4d4d4;"></div><div style="left:6.05px;top:331.00px;font-size:9.2px;line-height:10px;color:#444;font-weight:normal;white-space:nowrap;">9</div><div style="left:0.00px;top:367.94px;width:16.20px;height:1.00px;background:#d4d4d4;"></div><div style="left:3.49px;top:357.00px;font-size:9.2px;line-height:10px;color:#444;font-weight:normal;white-space:nowrap;">10</div><div style="left:0.00px;top:393.73px;width:16.20px;height:1.00px;background:#d4d4d4;"></div><div style="left:3.82px;top:383.00px;font-size:9.2px;line-height:10px;color:#444;font-weight:normal;white-space:nowrap;">11</div><div style="left:0.00px;top:419.52px;width:16.20px;height:1.00px;background:#d4d4d4;"></div><div style="left:3.49px;top:409.00px;font-size:9.2px;line-height:10px;color:#444;font-weight:normal;white-space:nowrap;">12</div><div style="left:0.00px;top:445.31px;width:16.20px;height:1.00px;background:#d4d4d4;"></div><div style="left:3.49px;top:435.00px;font-size:9.2px;line-height:10px;color:#444;font-weight:normal;white-space:nowrap;">13</div><div style="left:0.00px;top:471.10px;width:16.20px;height:1.00px;background:#d4d4d4;"></div><div style="left:3.49px;top:460.00px;font-size:9.2px;line-height:10px;color:#444;font-weight:normal;white-space:nowrap;">14</div><div style="left:0.00px;top:496.89px;width:16.20px;height:1.00px;background:#d4d4d4;"></div><div style="left:3.49px;top:486.00px;font-size:9.2px;line-height:10px;color:#444;font-weight:normal;white-space:nowrap;">15</div><div style="left:0.00px;top:522.68px;width:16.20px;height:1.00px;background:#d4d4d4;"></div><div style="left:3.49px;top:512.00px;font-size:9.2px;line-height:10px;color:#444;font-weight:normal;white-space:nowrap;">16</div><div style="left:17.00px;top:134.00px;width:998.00px;height:374.00px;background:#ffffff;"></div><div style="left:1015.00px;top:115.50px;width:9.00px;height:392.50px;background:#f7f7f7;border-left:1px solid #e6e6e6;box-sizing:border-box;"></div><svg style="left:1019.30px;top:123.50px;" width="7" height="6" viewBox="0 0 7 6"><path d="M0.5 5.5l3-4.5 3 4.5z" fill="#555"/></svg><div style="left:1019.50px;top:132.50px;width:4.50px;height:12.50px;background:#7c7c7c;border-radius:2px;"></div><svg style="left:1019.30px;top:500.50px;" width="7" height="6" viewBox="0 0 7 6"><path d="M0.5 0.5l3 4.5 3-4.5z" fill="#555"/></svg><div style="left:17.00px;top:134.00px;width:998.00px;height:37.00px;background:#595959;"></div><div style="left:17.00px;top:134.00px;width:83.70px;height:374.00px;background:#595959;"></div><div style="left:17.00px;top:247.00px;width:84.20px;height:33.00px;background:#75f7c3;"></div><div style="left:22.00px;top:219.00px;font-size:8.4px;line-height:10px;color:#f2f2f2;font-weight:bold;white-space:nowrap;transform:scaleX(0.8847);transform-origin:0 0;-webkit-text-stroke:0.2px;">CADASTRO</div><div style="left:22.00px;top:260.00px;font-size:8.4px;line-height:10px;color:#111;font-weight:bold;white-space:nowrap;transform:scaleX(0.9346);transform-origin:0 0;-webkit-text-stroke:0.2px;">INVENTÁRIO</div><div style="left:22.00px;top:295.00px;font-size:8.4px;line-height:10px;color:#f2f2f2;font-weight:bold;white-space:nowrap;transform:scaleX(0.9278);transform-origin:0 0;-webkit-text-stroke:0.2px;">FORMULÁRIO</div><div style="left:22.00px;top:330.00px;font-size:8.4px;line-height:10px;color:#f2f2f2;font-weight:bold;white-space:nowrap;transform:scaleX(0.8763);transform-origin:0 0;-webkit-text-stroke:0.2px;">RELATÓRIOS</div><div style="left:22.00px;top:360.00px;font-size:8.4px;line-height:10px;color:#f2f2f2;font-weight:bold;white-space:nowrap;transform:scaleX(0.8939);transform-origin:0 0;-webkit-text-stroke:0.2px;">DASHBOARDS</div><div style="left:22.00px;top:394.00px;font-size:8.4px;line-height:10px;color:#f2f2f2;font-weight:bold;white-space:nowrap;transform:scaleX(0.8790);transform-origin:0 0;-webkit-text-stroke:0.2px;">INSTRUÇÕES</div><svg style="left:15.00px;top:134.00px;" width="70" height="60" viewBox="0 0 70 60">
  <rect x="14.8" y="11.8" width="23" height="20.1" fill="#fbbb3b"/>
  <rect x="23.6" y="11.8" width="5.3" height="7.1" fill="#f4f0e8"/>
  <rect x="3" y="31.9" width="46" height="19.5" fill="#e3803f"/>
  <rect x="22.4" y="31.9" width="3" height="19.5" fill="#c9682b"/>
  <rect x="11.8" y="31.9" width="5.9" height="7.1" fill="#f7efe6"/>
  <rect x="2.1" y="51.4" width="48.9" height="4.3" fill="#0c3b7c"/>
  <circle cx="11.8" cy="13.2" r="6.3" fill="#e9f6f2" stroke="#0e2b55" stroke-width="1.8"/>
  <path d="M8.9 13.9l2.6 2.2 7.6-8.9" fill="none" stroke="#3fbf8c" stroke-width="1.7"/>
  <path d="M50.5 37.5l4 4" stroke="#13315e" stroke-width="3"/>
  <path d="M55.5 42.6l7.8 4.8" stroke="#e3803f" stroke-width="5" stroke-linecap="round"/>
  <circle cx="43.1" cy="32.1" r="8.6" fill="#9adcf6" stroke="#3d7fd9" stroke-width="3.6"/>
  <path d="M38.5 29a5.5 5.5 0 0 1 5-3.5" fill="none" stroke="#c9f0fc" stroke-width="2"/>
</svg><div style="left:0.00px;top:171.00px;width:101.00px;height:1.00px;background:#a3a3a3;"></div><div style="left:108.30px;top:185.20px;width:43.10px;height:27.10px;background:#595959;"></div><div style="left:116.90px;top:188.00px;font-size:8.4px;line-height:10px;color:#f4f4f4;font-weight:bold;white-space:nowrap;letter-spacing:-0.145px;width:35.1px;overflow:hidden;-webkit-text-stroke:0.15px;">Número</div><div style="left:116.90px;top:200.00px;font-size:8.4px;line-height:10px;color:#f4f4f4;font-weight:bold;white-space:nowrap;letter-spacing:-0.439px;width:24.1px;overflow:hidden;-webkit-text-stroke:0.15px;">série</div><div style="left:140.50px;top:201.20px;width:10.90px;height:11.10px;background:#fafafa;"></div><svg style="left:143.20px;top:205.40px;" width="6" height="4" viewBox="0 0 6 4"><path d="M0 0h5.6l-2.8 3z" fill="#555"/></svg><div style="left:153.40px;top:185.20px;width:99.30px;height:27.10px;background:#595959;"></div><div style="left:162.00px;top:194.00px;font-size:8.4px;line-height:10px;color:#f4f4f4;font-weight:bold;white-space:nowrap;letter-spacing:-0.308px;width:91.3px;overflow:hidden;-webkit-text-stroke:0.15px;">Categoria</div><div style="left:241.80px;top:201.20px;width:10.90px;height:11.10px;background:#fafafa;"></div><svg style="left:244.50px;top:205.40px;" width="6" height="4" viewBox="0 0 6 4"><path d="M0 0h5.6l-2.8 3z" fill="#555"/></svg><div style="left:254.70px;top:185.20px;width:89.80px;height:27.10px;background:#595959;"></div><div style="left:263.30px;top:194.00px;font-size:8.4px;line-height:10px;color:#f4f4f4;font-weight:bold;white-space:nowrap;letter-spacing:-0.059px;width:81.8px;overflow:hidden;-webkit-text-stroke:0.15px;">Item</div><div style="left:333.60px;top:201.20px;width:10.90px;height:11.10px;background:#fafafa;"></div><svg style="left:336.30px;top:205.40px;" width="6" height="4" viewBox="0 0 6 4"><path d="M0 0h5.6l-2.8 3z" fill="#555"/></svg><div style="left:346.50px;top:185.20px;width:75.20px;height:27.10px;background:#595959;"></div><div style="left:355.10px;top:194.00px;font-size:8.4px;line-height:10px;color:#f4f4f4;font-weight:bold;white-space:nowrap;letter-spacing:-0.442px;width:67.2px;overflow:hidden;-webkit-text-stroke:0.15px;">Responsável</div><div style="left:410.80px;top:201.20px;width:10.90px;height:11.10px;background:#fafafa;"></div><svg style="left:413.50px;top:205.40px;" width="6" height="4" viewBox="0 0 6 4"><path d="M0 0h5.6l-2.8 3z" fill="#555"/></svg><div style="left:423.70px;top:185.20px;width:70.80px;height:27.10px;background:#595959;"></div><div style="left:432.30px;top:194.00px;font-size:8.4px;line-height:10px;color:#f4f4f4;font-weight:bold;white-space:nowrap;letter-spacing:-0.498px;width:62.8px;overflow:hidden;-webkit-text-stroke:0.15px;">Área</div><div style="left:483.60px;top:201.20px;width:10.90px;height:11.10px;background:#fafafa;"></div><svg style="left:486.30px;top:205.40px;" width="6" height="4" viewBox="0 0 6 4"><path d="M0 0h5.6l-2.8 3z" fill="#555"/></svg><div style="left:496.50px;top:185.20px;width:73.80px;height:27.10px;background:#595959;"></div><div style="left:505.10px;top:194.00px;font-size:8.4px;line-height:10px;color:#f4f4f4;font-weight:bold;white-space:nowrap;letter-spacing:-0.742px;width:65.8px;overflow:hidden;-webkit-text-stroke:0.15px;">Local</div><div style="left:559.40px;top:201.20px;width:10.90px;height:11.10px;background:#fafafa;"></div><svg style="left:562.10px;top:205.40px;" width="6" height="4" viewBox="0 0 6 4"><path d="M0 0h5.6l-2.8 3z" fill="#555"/></svg><div style="left:572.30px;top:185.20px;width:59.90px;height:27.10px;background:#595959;"></div><div style="left:580.90px;top:188.00px;font-size:8.4px;line-height:10px;color:#f4f4f4;font-weight:bold;white-space:nowrap;letter-spacing:-0.222px;width:51.9px;overflow:hidden;-webkit-text-stroke:0.15px;">Data da</div><div style="left:580.90px;top:200.00px;font-size:8.4px;line-height:10px;color:#f4f4f4;font-weight:bold;white-space:nowrap;letter-spacing:-0.403px;width:40.9px;overflow:hidden;-webkit-text-stroke:0.15px;">Compra</div><div style="left:621.30px;top:201.20px;width:10.90px;height:11.10px;background:#fafafa;"></div><svg style="left:624.00px;top:205.40px;" width="6" height="4" viewBox="0 0 6 4"><path d="M0 0h5.6l-2.8 3z" fill="#555"/></svg><div style="left:634.20px;top:185.20px;width:59.40px;height:27.10px;background:#595959;"></div><div style="left:642.80px;top:188.00px;font-size:8.4px;line-height:10px;color:#f4f4f4;font-weight:bold;white-space:nowrap;letter-spacing:-0.262px;width:51.4px;overflow:hidden;-webkit-text-stroke:0.15px;">Meses desde</div><div style="left:642.80px;top:200.00px;font-size:8.4px;line-height:10px;color:#f4f4f4;font-weight:bold;white-space:nowrap;letter-spacing:-0.281px;width:40.4px;overflow:hidden;-webkit-text-stroke:0.15px;">a compra</div><div style="left:682.70px;top:201.20px;width:10.90px;height:11.10px;background:#fafafa;"></div><svg style="left:685.40px;top:205.40px;" width="6" height="4" viewBox="0 0 6 4"><path d="M0 0h5.6l-2.8 3z" fill="#555"/></svg><div style="left:695.60px;top:185.20px;width:60.00px;height:27.10px;background:#595959;"></div><div style="left:704.20px;top:194.00px;font-size:8.4px;line-height:10px;color:#f4f4f4;font-weight:bold;white-space:nowrap;letter-spacing:-0.222px;width:52.0px;overflow:hidden;-webkit-text-stroke:0.15px;">Valor</div><div style="left:744.70px;top:201.20px;width:10.90px;height:11.10px;background:#fafafa;"></div><svg style="left:747.40px;top:205.40px;" width="6" height="4" viewBox="0 0 6 4"><path d="M0 0h5.6l-2.8 3z" fill="#555"/></svg><div style="left:757.60px;top:185.20px;width:62.70px;height:27.10px;background:#595959;"></div><div style="left:766.20px;top:188.00px;font-size:8.4px;line-height:10px;color:#f4f4f4;font-weight:bold;white-space:nowrap;letter-spacing:-0.362px;width:54.7px;overflow:hidden;-webkit-text-stroke:0.15px;">Estado de</div><div style="left:766.20px;top:200.00px;font-size:8.4px;line-height:10px;color:#f4f4f4;font-weight:bold;white-space:nowrap;letter-spacing:-0.415px;width:43.7px;overflow:hidden;-webkit-text-stroke:0.15px;">Conservação</div><div style="left:809.40px;top:201.20px;width:10.90px;height:11.10px;background:#fafafa;"></div><svg style="left:812.10px;top:205.40px;" width="6" height="4" viewBox="0 0 6 4"><path d="M0 0h5.6l-2.8 3z" fill="#555"/></svg><div style="left:822.30px;top:185.20px;width:52.10px;height:27.10px;background:#595959;"></div><div style="left:830.90px;top:188.00px;font-size:8.4px;line-height:10px;color:#f4f4f4;font-weight:bold;white-space:nowrap;letter-spacing:-0.181px;width:44.1px;overflow:hidden;-webkit-text-stroke:0.15px;">Vida útil</div><div style="left:830.90px;top:200.00px;font-size:8.4px;line-height:10px;color:#f4f4f4;font-weight:bold;white-space:nowrap;letter-spacing:-0.343px;width:33.1px;overflow:hidden;-webkit-text-stroke:0.15px;">em anos</div><div style="left:863.50px;top:201.20px;width:10.90px;height:11.10px;background:#fafafa;"></div><svg style="left:866.20px;top:205.40px;" width="6" height="4" viewBox="0 0 6 4"><path d="M0 0h5.6l-2.8 3z" fill="#555"/></svg><div style="left:876.40px;top:185.20px;width:64.00px;height:27.10px;background:#595959;"></div><div style="left:885.00px;top:194.00px;font-size:8.4px;line-height:10px;color:#f4f4f4;font-weight:bold;white-space:nowrap;letter-spacing:-0.114px;width:56.0px;overflow:hidden;-webkit-text-stroke:0.15px;">Valor atual</div><div style="left:929.50px;top:201.20px;width:10.90px;height:11.10px;background:#fafafa;"></div><svg style="left:932.20px;top:205.40px;" width="6" height="4" viewBox="0 0 6 4"><path d="M0 0h5.6l-2.8 3z" fill="#555"/></svg><div style="left:942.40px;top:185.20px;width:59.20px;height:27.10px;background:#595959;"></div><div style="left:951.00px;top:194.00px;font-size:8.4px;line-height:10px;color:#f4f4f4;font-weight:bold;white-space:nowrap;letter-spacing:-0.270px;width:51.2px;overflow:hidden;-webkit-text-stroke:0.15px;">Depreciação</div><div style="left:990.70px;top:201.20px;width:10.90px;height:11.10px;background:#fafafa;"></div><svg style="left:993.40px;top:205.40px;" width="6" height="4" viewBox="0 0 6 4"><path d="M0 0h5.6l-2.8 3z" fill="#555"/></svg><div style="left:422.80px;top:213.70px;width:72.80px;height:25.79px;background:#f0f0f0;"></div><div style="left:633.30px;top:213.70px;width:61.40px;height:25.79px;background:#f0f0f0;"></div><div style="left:875.50px;top:213.70px;width:66.00px;height:25.79px;background:#f0f0f0;"></div><div style="left:756.70px;top:213.70px;width:64.70px;height:25.79px;background:#385723;"></div><div style="left:941.50px;top:213.70px;width:61.20px;height:25.79px;background:#385723;"></div><div style="left:422.80px;top:239.49px;width:72.80px;height:25.79px;background:#f0f0f0;"></div><div style="left:633.30px;top:239.49px;width:61.40px;height:25.79px;background:#f0f0f0;"></div><div style="left:875.50px;top:239.49px;width:66.00px;height:25.79px;background:#f0f0f0;"></div><div style="left:756.70px;top:239.49px;width:64.70px;height:25.79px;background:#bf8f00;"></div><div style="left:941.50px;top:239.49px;width:61.20px;height:25.79px;background:#385723;"></div><div style="left:422.80px;top:265.28px;width:72.80px;height:25.79px;background:#f0f0f0;"></div><div style="left:633.30px;top:265.28px;width:61.40px;height:25.79px;background:#f0f0f0;"></div><div style="left:875.50px;top:265.28px;width:66.00px;height:25.79px;background:#f0f0f0;"></div><div style="left:756.70px;top:265.28px;width:64.70px;height:25.79px;background:#c00000;"></div><div style="left:941.50px;top:265.28px;width:61.20px;height:25.79px;background:#385723;"></div><div style="left:422.80px;top:291.07px;width:72.80px;height:25.79px;background:#f0f0f0;"></div><div style="left:633.30px;top:291.07px;width:61.40px;height:25.79px;background:#f0f0f0;"></div><div style="left:875.50px;top:291.07px;width:66.00px;height:25.79px;background:#f0f0f0;"></div><div style="left:756.70px;top:291.07px;width:64.70px;height:25.79px;background:#385723;"></div><div style="left:941.50px;top:291.07px;width:61.20px;height:25.79px;background:#385723;"></div><div style="left:422.80px;top:316.86px;width:72.80px;height:25.79px;background:#f0f0f0;"></div><div style="left:633.30px;top:316.86px;width:61.40px;height:25.79px;background:#f0f0f0;"></div><div style="left:875.50px;top:316.86px;width:66.00px;height:25.79px;background:#f0f0f0;"></div><div style="left:756.70px;top:316.86px;width:64.70px;height:25.79px;background:#bf8f00;"></div><div style="left:941.50px;top:316.86px;width:61.20px;height:25.79px;background:#385723;"></div><div style="left:422.80px;top:342.65px;width:72.80px;height:25.79px;background:#f0f0f0;"></div><div style="left:633.30px;top:342.65px;width:61.40px;height:25.79px;background:#f0f0f0;"></div><div style="left:875.50px;top:342.65px;width:66.00px;height:25.79px;background:#f0f0f0;"></div><div style="left:756.70px;top:342.65px;width:64.70px;height:25.79px;background:#385723;"></div><div style="left:941.50px;top:342.65px;width:61.20px;height:25.79px;background:#385723;"></div><div style="left:422.80px;top:368.44px;width:72.80px;height:25.79px;background:#f0f0f0;"></div><div style="left:633.30px;top:368.44px;width:61.40px;height:25.79px;background:#f0f0f0;"></div><div style="left:875.50px;top:368.44px;width:66.00px;height:25.79px;background:#f0f0f0;"></div><div style="left:756.70px;top:368.44px;width:64.70px;height:25.79px;background:#bf8f00;"></div><div style="left:941.50px;top:368.44px;width:61.20px;height:25.79px;background:#385723;"></div><div style="left:422.80px;top:394.23px;width:72.80px;height:25.79px;background:#f0f0f0;"></div><div style="left:633.30px;top:394.23px;width:61.40px;height:25.79px;background:#f0f0f0;"></div><div style="left:875.50px;top:394.23px;width:66.00px;height:25.79px;background:#f0f0f0;"></div><div style="left:756.70px;top:394.23px;width:64.70px;height:25.79px;background:#385723;"></div><div style="left:941.50px;top:394.23px;width:61.20px;height:25.79px;background:#385723;"></div><div style="left:422.80px;top:420.02px;width:72.80px;height:25.79px;background:#f0f0f0;"></div><div style="left:633.30px;top:420.02px;width:61.40px;height:25.79px;background:#f0f0f0;"></div><div style="left:875.50px;top:420.02px;width:66.00px;height:25.79px;background:#f0f0f0;"></div><div style="left:756.70px;top:420.02px;width:64.70px;height:25.79px;background:#bf8f00;"></div><div style="left:941.50px;top:420.02px;width:61.20px;height:25.79px;background:#385723;"></div><div style="left:422.80px;top:445.81px;width:72.80px;height:25.79px;background:#f0f0f0;"></div><div style="left:633.30px;top:445.81px;width:61.40px;height:25.79px;background:#f0f0f0;"></div><div style="left:875.50px;top:445.81px;width:66.00px;height:25.79px;background:#f0f0f0;"></div><div style="left:756.70px;top:445.81px;width:64.70px;height:25.79px;background:#c00000;"></div><div style="left:941.50px;top:445.81px;width:61.20px;height:25.79px;background:#385723;"></div><div style="left:422.80px;top:471.60px;width:72.80px;height:25.79px;background:#f0f0f0;"></div><div style="left:633.30px;top:471.60px;width:61.40px;height:25.79px;background:#f0f0f0;"></div><div style="left:875.50px;top:471.60px;width:66.00px;height:25.79px;background:#f0f0f0;"></div><div style="left:756.70px;top:471.60px;width:64.70px;height:25.79px;background:#385723;"></div><div style="left:941.50px;top:471.60px;width:61.20px;height:25.79px;background:#385723;"></div><div style="left:422.80px;top:497.39px;width:72.80px;height:25.79px;background:#f0f0f0;"></div><div style="left:633.30px;top:497.39px;width:61.40px;height:25.79px;background:#f0f0f0;"></div><div style="left:875.50px;top:497.39px;width:66.00px;height:25.79px;background:#f0f0f0;"></div><div style="left:756.70px;top:497.39px;width:64.70px;height:25.79px;background:#bf8f00;"></div><div style="left:941.50px;top:497.39px;width:61.20px;height:25.79px;background:#385723;"></div><div style="left:106.90px;top:213.70px;width:1.00px;height:294.30px;background:#e3e3e3;"></div><div style="left:152.00px;top:213.70px;width:1.00px;height:294.30px;background:#e3e3e3;"></div><div style="left:253.30px;top:213.70px;width:1.00px;height:294.30px;background:#e3e3e3;"></div><div style="left:345.10px;top:213.70px;width:1.00px;height:294.30px;background:#e3e3e3;"></div><div style="left:422.30px;top:213.70px;width:1.00px;height:294.30px;background:#e3e3e3;"></div><div style="left:495.10px;top:213.70px;width:1.00px;height:294.30px;background:#e3e3e3;"></div><div style="left:570.90px;top:213.70px;width:1.00px;height:294.30px;background:#e3e3e3;"></div><div style="left:632.80px;top:213.70px;width:1.00px;height:294.30px;background:#e3e3e3;"></div><div style="left:694.20px;top:213.70px;width:1.00px;height:294.30px;background:#e3e3e3;"></div><div style="left:756.20px;top:213.70px;width:1.00px;height:294.30px;background:#e3e3e3;"></div><div style="left:820.90px;top:213.70px;width:1.00px;height:294.30px;background:#e3e3e3;"></div><div style="left:875.00px;top:213.70px;width:1.00px;height:294.30px;background:#e3e3e3;"></div><div style="left:941.00px;top:213.70px;width:1.00px;height:294.30px;background:#e3e3e3;"></div><div style="left:1002.20px;top:213.70px;width:1.00px;height:294.30px;background:#e3e3e3;"></div><div style="left:107.40px;top:213.20px;width:895.30px;height:1.00px;background:#e3e3e3;"></div><div style="left:107.40px;top:238.99px;width:895.30px;height:1.00px;background:#e3e3e3;"></div><div style="left:107.40px;top:264.78px;width:895.30px;height:1.00px;background:#e3e3e3;"></div><div style="left:107.40px;top:290.57px;width:895.30px;height:1.00px;background:#e3e3e3;"></div><div style="left:107.40px;top:316.36px;width:895.30px;height:1.00px;background:#e3e3e3;"></div><div style="left:107.40px;top:342.15px;width:895.30px;height:1.00px;background:#e3e3e3;"></div><div style="left:107.40px;top:367.94px;width:895.30px;height:1.00px;background:#e3e3e3;"></div><div style="left:107.40px;top:393.73px;width:895.30px;height:1.00px;background:#e3e3e3;"></div><div style="left:107.40px;top:419.52px;width:895.30px;height:1.00px;background:#e3e3e3;"></div><div style="left:107.40px;top:445.31px;width:895.30px;height:1.00px;background:#e3e3e3;"></div><div style="left:107.40px;top:471.10px;width:895.30px;height:1.00px;background:#e3e3e3;"></div><div style="left:107.40px;top:496.89px;width:895.30px;height:1.00px;background:#e3e3e3;"></div><div style="left:107.40px;top:522.68px;width:895.30px;height:1.00px;background:#e3e3e3;"></div><div style="left:756.70px;top:238.89px;width:64.70px;height:1.20px;background:rgba(255,255,230,0.5);"></div><div style="left:941.50px;top:238.89px;width:61.20px;height:1.20px;background:rgba(255,255,255,0.4);"></div><div style="left:756.70px;top:264.68px;width:64.70px;height:1.20px;background:rgba(255,255,230,0.5);"></div><div style="left:941.50px;top:264.68px;width:61.20px;height:1.20px;background:rgba(255,255,255,0.4);"></div><div style="left:756.70px;top:290.47px;width:64.70px;height:1.20px;background:rgba(255,255,230,0.5);"></div><div style="left:941.50px;top:290.47px;width:61.20px;height:1.20px;background:rgba(255,255,255,0.4);"></div><div style="left:756.70px;top:316.26px;width:64.70px;height:1.20px;background:rgba(255,255,230,0.5);"></div><div style="left:941.50px;top:316.26px;width:61.20px;height:1.20px;background:rgba(255,255,255,0.4);"></div><div style="left:756.70px;top:342.05px;width:64.70px;height:1.20px;background:rgba(255,255,230,0.5);"></div><div style="left:941.50px;top:342.05px;width:61.20px;height:1.20px;background:rgba(255,255,255,0.4);"></div><div style="left:756.70px;top:367.84px;width:64.70px;height:1.20px;background:rgba(255,255,230,0.5);"></div><div style="left:941.50px;top:367.84px;width:61.20px;height:1.20px;background:rgba(255,255,255,0.4);"></div><div style="left:756.70px;top:393.63px;width:64.70px;height:1.20px;background:rgba(255,255,230,0.5);"></div><div style="left:941.50px;top:393.63px;width:61.20px;height:1.20px;background:rgba(255,255,255,0.4);"></div><div style="left:756.70px;top:419.42px;width:64.70px;height:1.20px;background:rgba(255,255,230,0.5);"></div><div style="left:941.50px;top:419.42px;width:61.20px;height:1.20px;background:rgba(255,255,255,0.4);"></div><div style="left:756.70px;top:445.21px;width:64.70px;height:1.20px;background:rgba(255,255,230,0.5);"></div><div style="left:941.50px;top:445.21px;width:61.20px;height:1.20px;background:rgba(255,255,255,0.4);"></div><div style="left:756.70px;top:471.00px;width:64.70px;height:1.20px;background:rgba(255,255,230,0.5);"></div><div style="left:941.50px;top:471.00px;width:61.20px;height:1.20px;background:rgba(255,255,255,0.4);"></div><div style="left:756.70px;top:496.79px;width:64.70px;height:1.20px;background:rgba(255,255,230,0.5);"></div><div style="left:941.50px;top:496.79px;width:61.20px;height:1.20px;background:rgba(255,255,255,0.4);"></div><div style="left:756.70px;top:522.58px;width:64.70px;height:1.20px;background:rgba(255,255,230,0.5);"></div><div style="left:941.50px;top:522.58px;width:61.20px;height:1.20px;background:rgba(255,255,255,0.4);"></div><div style="left:756.20px;top:213.70px;width:1.00px;height:294.30px;background:#ffffff;"></div><div style="left:820.90px;top:213.70px;width:1.00px;height:294.30px;background:#ffffff;"></div><div style="left:941.00px;top:213.70px;width:1.00px;height:294.30px;background:#ffffff;"></div><div style="left:1002.20px;top:213.70px;width:1.00px;height:294.30px;background:#ffffff;"></div><div style="left:117.00px;top:221.00px;font-size:8.4px;line-height:10px;color:#303030;font-weight:normal;white-space:nowrap;-webkit-text-stroke:0.15px;">1</div><div style="left:162.10px;top:221.00px;font-size:8.4px;line-height:10px;color:#303030;font-weight:normal;white-space:nowrap;letter-spacing:-0.003px;-webkit-text-stroke:0.15px;">Categoria 1</div><div style="left:263.40px;top:221.00px;font-size:8.4px;line-height:10px;color:#303030;font-weight:normal;white-space:nowrap;letter-spacing:0.157px;-webkit-text-stroke:0.15px;">Item 1</div><div style="left:355.20px;top:221.00px;font-size:8.4px;line-height:10px;color:#303030;font-weight:normal;white-space:nowrap;letter-spacing:0.090px;-webkit-text-stroke:0.15px;">Funcionário 1</div><div style="left:432.40px;top:221.00px;font-size:8.4px;line-height:10px;color:#303030;font-weight:normal;white-space:nowrap;letter-spacing:0.051px;-webkit-text-stroke:0.15px;">Financeiro</div><div style="left:505.20px;top:221.00px;font-size:8.4px;line-height:10px;color:#303030;font-weight:normal;white-space:nowrap;letter-spacing:-0.268px;-webkit-text-stroke:0.15px;">Local</div><div style="left:581.60px;top:221.00px;font-size:8.4px;line-height:10px;color:#303030;font-weight:normal;white-space:nowrap;letter-spacing:0.351px;-webkit-text-stroke:0.15px;">01/01/2023</div><div style="left:642.90px;top:221.00px;font-size:8.4px;line-height:10px;color:#303030;font-weight:normal;white-space:nowrap;letter-spacing:0.115px;-webkit-text-stroke:0.15px;">11,0</div><div style="left:712.77px;top:221.00px;font-size:8.4px;line-height:10px;color:#303030;font-weight:normal;white-space:nowrap;letter-spacing:-0.247px;-webkit-text-stroke:0.15px;">R$ 450</div><div style="left:766.30px;top:221.00px;font-size:8.4px;line-height:10px;color:#e2efda;font-weight:normal;white-space:nowrap;letter-spacing:-0.126px;-webkit-text-stroke:0.15px;">Bom</div><div style="left:831.00px;top:221.00px;font-size:8.4px;line-height:10px;color:#303030;font-weight:normal;white-space:nowrap;-webkit-text-stroke:0.15px;">5</div><div style="left:885.10px;top:221.00px;font-size:8.4px;line-height:10px;color:#303030;font-weight:normal;white-space:nowrap;letter-spacing:-0.247px;-webkit-text-stroke:0.15px;">R$ 368</div><div style="left:951.10px;top:221.00px;font-size:8.4px;line-height:10px;color:#e2efda;font-weight:normal;white-space:nowrap;letter-spacing:-0.156px;-webkit-text-stroke:0.15px;">Em dia</div><div style="left:117.00px;top:247.00px;font-size:8.4px;line-height:10px;color:#303030;font-weight:normal;white-space:nowrap;-webkit-text-stroke:0.15px;">2</div><div style="left:162.10px;top:247.00px;font-size:8.4px;line-height:10px;color:#303030;font-weight:normal;white-space:nowrap;letter-spacing:-0.003px;-webkit-text-stroke:0.15px;">Categoria 2</div><div style="left:263.40px;top:247.00px;font-size:8.4px;line-height:10px;color:#303030;font-weight:normal;white-space:nowrap;letter-spacing:0.157px;-webkit-text-stroke:0.15px;">Item 2</div><div style="left:355.20px;top:247.00px;font-size:8.4px;line-height:10px;color:#303030;font-weight:normal;white-space:nowrap;letter-spacing:0.090px;-webkit-text-stroke:0.15px;">Funcionário 2</div><div style="left:432.40px;top:247.00px;font-size:8.4px;line-height:10px;color:#303030;font-weight:normal;white-space:nowrap;letter-spacing:0.334px;-webkit-text-stroke:0.15px;">Adminitrativo</div><div style="left:581.60px;top:247.00px;font-size:8.4px;line-height:10px;color:#303030;font-weight:normal;white-space:nowrap;letter-spacing:0.421px;-webkit-text-stroke:0.15px;">11/01/2023</div><div style="left:642.90px;top:247.00px;font-size:8.4px;line-height:10px;color:#303030;font-weight:normal;white-space:nowrap;letter-spacing:0.115px;-webkit-text-stroke:0.15px;">11,0</div><div style="left:712.77px;top:247.00px;font-size:8.4px;line-height:10px;color:#303030;font-weight:normal;white-space:nowrap;letter-spacing:-0.247px;-webkit-text-stroke:0.15px;">R$ 452</div><div style="left:766.30px;top:247.00px;font-size:8.4px;line-height:10px;color:#fff2cc;font-weight:normal;white-space:nowrap;letter-spacing:-0.117px;-webkit-text-stroke:0.15px;">Regular</div><div style="left:831.00px;top:247.00px;font-size:8.4px;line-height:10px;color:#303030;font-weight:normal;white-space:nowrap;-webkit-text-stroke:0.15px;">4</div><div style="left:885.10px;top:247.00px;font-size:8.4px;line-height:10px;color:#303030;font-weight:normal;white-space:nowrap;letter-spacing:-0.247px;-webkit-text-stroke:0.15px;">R$ 348</div><div style="left:951.10px;top:247.00px;font-size:8.4px;line-height:10px;color:#e2efda;font-weight:normal;white-space:nowrap;letter-spacing:-0.156px;-webkit-text-stroke:0.15px;">Em dia</div><svg style="left:571.40px;top:239.49px;" width="5" height="5" viewBox="0 0 5 5"><path d="M0.3 0.3h4.2L0.3 4.5z" fill="#1e7b3c"/></svg><svg style="left:694.70px;top:239.49px;" width="5" height="5" viewBox="0 0 5 5"><path d="M0.3 0.3h4.2L0.3 4.5z" fill="#1e7b3c"/></svg><div style="left:117.00px;top:273.00px;font-size:8.4px;line-height:10px;color:#303030;font-weight:normal;white-space:nowrap;-webkit-text-stroke:0.15px;">3</div><div style="left:162.10px;top:273.00px;font-size:8.4px;line-height:10px;color:#303030;font-weight:normal;white-space:nowrap;letter-spacing:-0.003px;-webkit-text-stroke:0.15px;">Categoria 3</div><div style="left:263.40px;top:273.00px;font-size:8.4px;line-height:10px;color:#303030;font-weight:normal;white-space:nowrap;letter-spacing:0.157px;-webkit-text-stroke:0.15px;">Item 3</div><div style="left:355.20px;top:273.00px;font-size:8.4px;line-height:10px;color:#303030;font-weight:normal;white-space:nowrap;letter-spacing:0.090px;-webkit-text-stroke:0.15px;">Funcionário 3</div><div style="left:432.40px;top:273.00px;font-size:8.4px;line-height:10px;color:#303030;font-weight:normal;white-space:nowrap;letter-spacing:-0.083px;-webkit-text-stroke:0.15px;">Compras</div><div style="left:581.60px;top:273.00px;font-size:8.4px;line-height:10px;color:#303030;font-weight:normal;white-space:nowrap;letter-spacing:0.351px;-webkit-text-stroke:0.15px;">21/01/2023</div><div style="left:642.90px;top:273.00px;font-size:8.4px;line-height:10px;color:#303030;font-weight:normal;white-space:nowrap;letter-spacing:0.115px;-webkit-text-stroke:0.15px;">11,0</div><div style="left:712.77px;top:273.00px;font-size:8.4px;line-height:10px;color:#303030;font-weight:normal;white-space:nowrap;letter-spacing:-0.247px;-webkit-text-stroke:0.15px;">R$ 454</div><div style="left:766.30px;top:273.00px;font-size:8.4px;line-height:10px;color:#ffe5e5;font-weight:normal;white-space:nowrap;letter-spacing:-0.147px;-webkit-text-stroke:0.15px;">Ruim</div><div style="left:831.00px;top:273.00px;font-size:8.4px;line-height:10px;color:#303030;font-weight:normal;white-space:nowrap;-webkit-text-stroke:0.15px;">1</div><div style="left:885.10px;top:273.00px;font-size:8.4px;line-height:10px;color:#303030;font-weight:normal;white-space:nowrap;letter-spacing:-0.353px;-webkit-text-stroke:0.15px;">R$ 38</div><div style="left:951.10px;top:273.00px;font-size:8.4px;line-height:10px;color:#e2efda;font-weight:normal;white-space:nowrap;letter-spacing:-0.156px;-webkit-text-stroke:0.15px;">Em dia</div><svg style="left:571.40px;top:265.28px;" width="5" height="5" viewBox="0 0 5 5"><path d="M0.3 0.3h4.2L0.3 4.5z" fill="#1e7b3c"/></svg><svg style="left:694.70px;top:265.28px;" width="5" height="5" viewBox="0 0 5 5"><path d="M0.3 0.3h4.2L0.3 4.5z" fill="#1e7b3c"/></svg><div style="left:117.00px;top:299.00px;font-size:8.4px;line-height:10px;color:#303030;font-weight:normal;white-space:nowrap;-webkit-text-stroke:0.15px;">4</div><div style="left:162.10px;top:299.00px;font-size:8.4px;line-height:10px;color:#303030;font-weight:normal;white-space:nowrap;letter-spacing:-0.003px;-webkit-text-stroke:0.15px;">Categoria 4</div><div style="left:263.40px;top:299.00px;font-size:8.4px;line-height:10px;color:#303030;font-weight:normal;white-space:nowrap;letter-spacing:0.157px;-webkit-text-stroke:0.15px;">Item 4</div><div style="left:355.20px;top:299.00px;font-size:8.4px;line-height:10px;color:#303030;font-weight:normal;white-space:nowrap;letter-spacing:0.090px;-webkit-text-stroke:0.15px;">Funcionário 4</div><div style="left:432.40px;top:299.00px;font-size:8.4px;line-height:10px;color:#303030;font-weight:normal;white-space:nowrap;letter-spacing:0.332px;-webkit-text-stroke:0.15px;">Atendimento</div><div style="left:581.60px;top:299.00px;font-size:8.4px;line-height:10px;color:#303030;font-weight:normal;white-space:nowrap;letter-spacing:0.351px;-webkit-text-stroke:0.15px;">31/01/2023</div><div style="left:642.90px;top:299.00px;font-size:8.4px;line-height:10px;color:#303030;font-weight:normal;white-space:nowrap;letter-spacing:-0.095px;-webkit-text-stroke:0.15px;">10,0</div><div style="left:712.77px;top:299.00px;font-size:8.4px;line-height:10px;color:#303030;font-weight:normal;white-space:nowrap;letter-spacing:-0.247px;-webkit-text-stroke:0.15px;">R$ 456</div><div style="left:766.30px;top:299.00px;font-size:8.4px;line-height:10px;color:#e2efda;font-weight:normal;white-space:nowrap;letter-spacing:-0.126px;-webkit-text-stroke:0.15px;">Bom</div><div style="left:831.00px;top:299.00px;font-size:8.4px;line-height:10px;color:#303030;font-weight:normal;white-space:nowrap;-webkit-text-stroke:0.15px;">2</div><div style="left:885.10px;top:299.00px;font-size:8.4px;line-height:10px;color:#303030;font-weight:normal;white-space:nowrap;letter-spacing:-0.247px;-webkit-text-stroke:0.15px;">R$ 266</div><div style="left:951.10px;top:299.00px;font-size:8.4px;line-height:10px;color:#e2efda;font-weight:normal;white-space:nowrap;letter-spacing:-0.156px;-webkit-text-stroke:0.15px;">Em dia</div><svg style="left:571.40px;top:291.07px;" width="5" height="5" viewBox="0 0 5 5"><path d="M0.3 0.3h4.2L0.3 4.5z" fill="#1e7b3c"/></svg><svg style="left:694.70px;top:291.07px;" width="5" height="5" viewBox="0 0 5 5"><path d="M0.3 0.3h4.2L0.3 4.5z" fill="#1e7b3c"/></svg><div style="left:117.00px;top:324.00px;font-size:8.4px;line-height:10px;color:#303030;font-weight:normal;white-space:nowrap;-webkit-text-stroke:0.15px;">5</div><div style="left:162.10px;top:324.00px;font-size:8.4px;line-height:10px;color:#303030;font-weight:normal;white-space:nowrap;letter-spacing:-0.003px;-webkit-text-stroke:0.15px;">Categoria 1</div><div style="left:263.40px;top:324.00px;font-size:8.4px;line-height:10px;color:#303030;font-weight:normal;white-space:nowrap;letter-spacing:0.157px;-webkit-text-stroke:0.15px;">Item 5</div><div style="left:355.20px;top:324.00px;font-size:8.4px;line-height:10px;color:#303030;font-weight:normal;white-space:nowrap;letter-spacing:0.090px;-webkit-text-stroke:0.15px;">Funcionário 5</div><div style="left:432.40px;top:324.00px;font-size:8.4px;line-height:10px;color:#303030;font-weight:normal;white-space:nowrap;letter-spacing:-0.083px;-webkit-text-stroke:0.15px;">Compras</div><div style="left:581.60px;top:324.00px;font-size:8.4px;line-height:10px;color:#303030;font-weight:normal;white-space:nowrap;letter-spacing:0.351px;-webkit-text-stroke:0.15px;">10/02/2023</div><div style="left:642.90px;top:324.00px;font-size:8.4px;line-height:10px;color:#303030;font-weight:normal;white-space:nowrap;letter-spacing:-0.095px;-webkit-text-stroke:0.15px;">10,0</div><div style="left:712.77px;top:324.00px;font-size:8.4px;line-height:10px;color:#303030;font-weight:normal;white-space:nowrap;letter-spacing:-0.247px;-webkit-text-stroke:0.15px;">R$ 458</div><div style="left:766.30px;top:324.00px;font-size:8.4px;line-height:10px;color:#fff2cc;font-weight:normal;white-space:nowrap;letter-spacing:-0.117px;-webkit-text-stroke:0.15px;">Regular</div><div style="left:831.00px;top:324.00px;font-size:8.4px;line-height:10px;color:#303030;font-weight:normal;white-space:nowrap;-webkit-text-stroke:0.15px;">3</div><div style="left:885.10px;top:324.00px;font-size:8.4px;line-height:10px;color:#303030;font-weight:normal;white-space:nowrap;letter-spacing:-0.247px;-webkit-text-stroke:0.15px;">R$ 331</div><div style="left:951.10px;top:324.00px;font-size:8.4px;line-height:10px;color:#e2efda;font-weight:normal;white-space:nowrap;letter-spacing:-0.156px;-webkit-text-stroke:0.15px;">Em dia</div><svg style="left:571.40px;top:316.86px;" width="5" height="5" viewBox="0 0 5 5"><path d="M0.3 0.3h4.2L0.3 4.5z" fill="#1e7b3c"/></svg><svg style="left:694.70px;top:316.86px;" width="5" height="5" viewBox="0 0 5 5"><path d="M0.3 0.3h4.2L0.3 4.5z" fill="#1e7b3c"/></svg><div style="left:117.00px;top:350.00px;font-size:8.4px;line-height:10px;color:#303030;font-weight:normal;white-space:nowrap;-webkit-text-stroke:0.15px;">6</div><div style="left:162.10px;top:350.00px;font-size:8.4px;line-height:10px;color:#303030;font-weight:normal;white-space:nowrap;letter-spacing:-0.003px;-webkit-text-stroke:0.15px;">Categoria 2</div><div style="left:263.40px;top:350.00px;font-size:8.4px;line-height:10px;color:#303030;font-weight:normal;white-space:nowrap;letter-spacing:0.157px;-webkit-text-stroke:0.15px;">Item 6</div><div style="left:355.20px;top:350.00px;font-size:8.4px;line-height:10px;color:#303030;font-weight:normal;white-space:nowrap;letter-spacing:0.090px;-webkit-text-stroke:0.15px;">Funcionário 1</div><div style="left:432.40px;top:350.00px;font-size:8.4px;line-height:10px;color:#303030;font-weight:normal;white-space:nowrap;letter-spacing:0.051px;-webkit-text-stroke:0.15px;">Financeiro</div><div style="left:581.60px;top:350.00px;font-size:8.4px;line-height:10px;color:#303030;font-weight:normal;white-space:nowrap;letter-spacing:0.351px;-webkit-text-stroke:0.15px;">20/02/2023</div><div style="left:642.90px;top:350.00px;font-size:8.4px;line-height:10px;color:#303030;font-weight:normal;white-space:nowrap;letter-spacing:-0.095px;-webkit-text-stroke:0.15px;">10,0</div><div style="left:712.77px;top:350.00px;font-size:8.4px;line-height:10px;color:#303030;font-weight:normal;white-space:nowrap;letter-spacing:-0.247px;-webkit-text-stroke:0.15px;">R$ 460</div><div style="left:766.30px;top:350.00px;font-size:8.4px;line-height:10px;color:#e2efda;font-weight:normal;white-space:nowrap;letter-spacing:-0.126px;-webkit-text-stroke:0.15px;">Bom</div><div style="left:831.00px;top:350.00px;font-size:8.4px;line-height:10px;color:#303030;font-weight:normal;white-space:nowrap;-webkit-text-stroke:0.15px;">1</div><div style="left:885.10px;top:350.00px;font-size:8.4px;line-height:10px;color:#303030;font-weight:normal;white-space:nowrap;letter-spacing:-0.353px;-webkit-text-stroke:0.15px;">R$ 77</div><div style="left:951.10px;top:350.00px;font-size:8.4px;line-height:10px;color:#e2efda;font-weight:normal;white-space:nowrap;letter-spacing:-0.156px;-webkit-text-stroke:0.15px;">Em dia</div><svg style="left:571.40px;top:342.65px;" width="5" height="5" viewBox="0 0 5 5"><path d="M0.3 0.3h4.2L0.3 4.5z" fill="#1e7b3c"/></svg><svg style="left:694.70px;top:342.65px;" width="5" height="5" viewBox="0 0 5 5"><path d="M0.3 0.3h4.2L0.3 4.5z" fill="#1e7b3c"/></svg><div style="left:117.00px;top:376.00px;font-size:8.4px;line-height:10px;color:#303030;font-weight:normal;white-space:nowrap;-webkit-text-stroke:0.15px;">7</div><div style="left:162.10px;top:376.00px;font-size:8.4px;line-height:10px;color:#303030;font-weight:normal;white-space:nowrap;letter-spacing:-0.003px;-webkit-text-stroke:0.15px;">Categoria 3</div><div style="left:263.40px;top:376.00px;font-size:8.4px;line-height:10px;color:#303030;font-weight:normal;white-space:nowrap;letter-spacing:0.157px;-webkit-text-stroke:0.15px;">Item 7</div><div style="left:355.20px;top:376.00px;font-size:8.4px;line-height:10px;color:#303030;font-weight:normal;white-space:nowrap;letter-spacing:0.090px;-webkit-text-stroke:0.15px;">Funcionário 2</div><div style="left:432.40px;top:376.00px;font-size:8.4px;line-height:10px;color:#303030;font-weight:normal;white-space:nowrap;letter-spacing:0.334px;-webkit-text-stroke:0.15px;">Adminitrativo</div><div style="left:581.60px;top:376.00px;font-size:8.4px;line-height:10px;color:#303030;font-weight:normal;white-space:nowrap;letter-spacing:0.351px;-webkit-text-stroke:0.15px;">02/03/2023</div><div style="left:642.90px;top:376.00px;font-size:8.4px;line-height:10px;color:#303030;font-weight:normal;white-space:nowrap;letter-spacing:-0.231px;-webkit-text-stroke:0.15px;">9,0</div><div style="left:712.77px;top:376.00px;font-size:8.4px;line-height:10px;color:#303030;font-weight:normal;white-space:nowrap;letter-spacing:-0.247px;-webkit-text-stroke:0.15px;">R$ 462</div><div style="left:766.30px;top:376.00px;font-size:8.4px;line-height:10px;color:#fff2cc;font-weight:normal;white-space:nowrap;letter-spacing:-0.117px;-webkit-text-stroke:0.15px;">Regular</div><div style="left:831.00px;top:376.00px;font-size:8.4px;line-height:10px;color:#303030;font-weight:normal;white-space:nowrap;-webkit-text-stroke:0.15px;">2</div><div style="left:885.10px;top:376.00px;font-size:8.4px;line-height:10px;color:#303030;font-weight:normal;white-space:nowrap;letter-spacing:-0.247px;-webkit-text-stroke:0.15px;">R$ 289</div><div style="left:951.10px;top:376.00px;font-size:8.4px;line-height:10px;color:#e2efda;font-weight:normal;white-space:nowrap;letter-spacing:-0.156px;-webkit-text-stroke:0.15px;">Em dia</div><svg style="left:571.40px;top:368.44px;" width="5" height="5" viewBox="0 0 5 5"><path d="M0.3 0.3h4.2L0.3 4.5z" fill="#1e7b3c"/></svg><svg style="left:694.70px;top:368.44px;" width="5" height="5" viewBox="0 0 5 5"><path d="M0.3 0.3h4.2L0.3 4.5z" fill="#1e7b3c"/></svg><div style="left:117.00px;top:402.00px;font-size:8.4px;line-height:10px;color:#303030;font-weight:normal;white-space:nowrap;-webkit-text-stroke:0.15px;">8</div><div style="left:162.10px;top:402.00px;font-size:8.4px;line-height:10px;color:#303030;font-weight:normal;white-space:nowrap;letter-spacing:-0.003px;-webkit-text-stroke:0.15px;">Categoria 4</div><div style="left:263.40px;top:402.00px;font-size:8.4px;line-height:10px;color:#303030;font-weight:normal;white-space:nowrap;letter-spacing:0.157px;-webkit-text-stroke:0.15px;">Item 8</div><div style="left:355.20px;top:402.00px;font-size:8.4px;line-height:10px;color:#303030;font-weight:normal;white-space:nowrap;letter-spacing:0.090px;-webkit-text-stroke:0.15px;">Funcionário 3</div><div style="left:432.40px;top:402.00px;font-size:8.4px;line-height:10px;color:#303030;font-weight:normal;white-space:nowrap;letter-spacing:-0.083px;-webkit-text-stroke:0.15px;">Compras</div><div style="left:581.60px;top:402.00px;font-size:8.4px;line-height:10px;color:#303030;font-weight:normal;white-space:nowrap;letter-spacing:0.351px;-webkit-text-stroke:0.15px;">12/03/2023</div><div style="left:642.90px;top:402.00px;font-size:8.4px;line-height:10px;color:#303030;font-weight:normal;white-space:nowrap;letter-spacing:-0.231px;-webkit-text-stroke:0.15px;">9,0</div><div style="left:712.77px;top:402.00px;font-size:8.4px;line-height:10px;color:#303030;font-weight:normal;white-space:nowrap;letter-spacing:-0.247px;-webkit-text-stroke:0.15px;">R$ 464</div><div style="left:766.30px;top:402.00px;font-size:8.4px;line-height:10px;color:#e2efda;font-weight:normal;white-space:nowrap;letter-spacing:-0.126px;-webkit-text-stroke:0.15px;">Bom</div><div style="left:831.00px;top:402.00px;font-size:8.4px;line-height:10px;color:#303030;font-weight:normal;white-space:nowrap;-webkit-text-stroke:0.15px;">3</div><div style="left:885.10px;top:402.00px;font-size:8.4px;line-height:10px;color:#303030;font-weight:normal;white-space:nowrap;letter-spacing:-0.247px;-webkit-text-stroke:0.15px;">R$ 348</div><div style="left:951.10px;top:402.00px;font-size:8.4px;line-height:10px;color:#e2efda;font-weight:normal;white-space:nowrap;letter-spacing:-0.156px;-webkit-text-stroke:0.15px;">Em dia</div><svg style="left:571.40px;top:394.23px;" width="5" height="5" viewBox="0 0 5 5"><path d="M0.3 0.3h4.2L0.3 4.5z" fill="#1e7b3c"/></svg><svg style="left:694.70px;top:394.23px;" width="5" height="5" viewBox="0 0 5 5"><path d="M0.3 0.3h4.2L0.3 4.5z" fill="#1e7b3c"/></svg><div style="left:117.00px;top:428.00px;font-size:8.4px;line-height:10px;color:#303030;font-weight:normal;white-space:nowrap;-webkit-text-stroke:0.15px;">9</div><div style="left:162.10px;top:428.00px;font-size:8.4px;line-height:10px;color:#303030;font-weight:normal;white-space:nowrap;letter-spacing:-0.003px;-webkit-text-stroke:0.15px;">Categoria 1</div><div style="left:263.40px;top:428.00px;font-size:8.4px;line-height:10px;color:#303030;font-weight:normal;white-space:nowrap;letter-spacing:0.157px;-webkit-text-stroke:0.15px;">Item 9</div><div style="left:355.20px;top:428.00px;font-size:8.4px;line-height:10px;color:#303030;font-weight:normal;white-space:nowrap;letter-spacing:0.090px;-webkit-text-stroke:0.15px;">Funcionário 1</div><div style="left:432.40px;top:428.00px;font-size:8.4px;line-height:10px;color:#303030;font-weight:normal;white-space:nowrap;letter-spacing:0.051px;-webkit-text-stroke:0.15px;">Financeiro</div><div style="left:581.60px;top:428.00px;font-size:8.4px;line-height:10px;color:#303030;font-weight:normal;white-space:nowrap;letter-spacing:0.351px;-webkit-text-stroke:0.15px;">22/03/2023</div><div style="left:642.90px;top:428.00px;font-size:8.4px;line-height:10px;color:#303030;font-weight:normal;white-space:nowrap;letter-spacing:-0.231px;-webkit-text-stroke:0.15px;">9,0</div><div style="left:712.77px;top:428.00px;font-size:8.4px;line-height:10px;color:#303030;font-weight:normal;white-space:nowrap;letter-spacing:-0.247px;-webkit-text-stroke:0.15px;">R$ 466</div><div style="left:766.30px;top:428.00px;font-size:8.4px;line-height:10px;color:#fff2cc;font-weight:normal;white-space:nowrap;letter-spacing:-0.117px;-webkit-text-stroke:0.15px;">Regular</div><div style="left:831.00px;top:428.00px;font-size:8.4px;line-height:10px;color:#303030;font-weight:normal;white-space:nowrap;-webkit-text-stroke:0.15px;">1</div><div style="left:885.10px;top:428.00px;font-size:8.4px;line-height:10px;color:#303030;font-weight:normal;white-space:nowrap;letter-spacing:-0.121px;-webkit-text-stroke:0.15px;">R$ 117</div><div style="left:951.10px;top:428.00px;font-size:8.4px;line-height:10px;color:#e2efda;font-weight:normal;white-space:nowrap;letter-spacing:-0.156px;-webkit-text-stroke:0.15px;">Em dia</div><svg style="left:571.40px;top:420.02px;" width="5" height="5" viewBox="0 0 5 5"><path d="M0.3 0.3h4.2L0.3 4.5z" fill="#1e7b3c"/></svg><svg style="left:694.70px;top:420.02px;" width="5" height="5" viewBox="0 0 5 5"><path d="M0.3 0.3h4.2L0.3 4.5z" fill="#1e7b3c"/></svg><div style="left:117.00px;top:453.00px;font-size:8.4px;line-height:10px;color:#303030;font-weight:normal;white-space:nowrap;letter-spacing:-0.493px;-webkit-text-stroke:0.15px;">10</div><div style="left:162.10px;top:453.00px;font-size:8.4px;line-height:10px;color:#303030;font-weight:normal;white-space:nowrap;letter-spacing:-0.003px;-webkit-text-stroke:0.15px;">Categoria 2</div><div style="left:263.40px;top:453.00px;font-size:8.4px;line-height:10px;color:#303030;font-weight:normal;white-space:nowrap;letter-spacing:0.160px;-webkit-text-stroke:0.15px;">Item 10</div><div style="left:355.20px;top:453.00px;font-size:8.4px;line-height:10px;color:#303030;font-weight:normal;white-space:nowrap;letter-spacing:0.090px;-webkit-text-stroke:0.15px;">Funcionário 2</div><div style="left:432.40px;top:453.00px;font-size:8.4px;line-height:10px;color:#303030;font-weight:normal;white-space:nowrap;letter-spacing:0.334px;-webkit-text-stroke:0.15px;">Adminitrativo</div><div style="left:581.60px;top:453.00px;font-size:8.4px;line-height:10px;color:#303030;font-weight:normal;white-space:nowrap;letter-spacing:0.351px;-webkit-text-stroke:0.15px;">01/04/2023</div><div style="left:642.90px;top:453.00px;font-size:8.4px;line-height:10px;color:#303030;font-weight:normal;white-space:nowrap;letter-spacing:-0.231px;-webkit-text-stroke:0.15px;">8,0</div><div style="left:712.77px;top:453.00px;font-size:8.4px;line-height:10px;color:#303030;font-weight:normal;white-space:nowrap;letter-spacing:-0.247px;-webkit-text-stroke:0.15px;">R$ 468</div><div style="left:766.30px;top:453.00px;font-size:8.4px;line-height:10px;color:#ffe5e5;font-weight:normal;white-space:nowrap;letter-spacing:-0.147px;-webkit-text-stroke:0.15px;">Ruim</div><div style="left:831.00px;top:453.00px;font-size:8.4px;line-height:10px;color:#303030;font-weight:normal;white-space:nowrap;-webkit-text-stroke:0.15px;">2</div><div style="left:885.10px;top:453.00px;font-size:8.4px;line-height:10px;color:#303030;font-weight:normal;white-space:nowrap;letter-spacing:-0.247px;-webkit-text-stroke:0.15px;">R$ 312</div><div style="left:951.10px;top:453.00px;font-size:8.4px;line-height:10px;color:#e2efda;font-weight:normal;white-space:nowrap;letter-spacing:-0.156px;-webkit-text-stroke:0.15px;">Em dia</div><svg style="left:571.40px;top:445.81px;" width="5" height="5" viewBox="0 0 5 5"><path d="M0.3 0.3h4.2L0.3 4.5z" fill="#1e7b3c"/></svg><svg style="left:694.70px;top:445.81px;" width="5" height="5" viewBox="0 0 5 5"><path d="M0.3 0.3h4.2L0.3 4.5z" fill="#1e7b3c"/></svg><div style="left:117.00px;top:479.00px;font-size:8.4px;line-height:10px;color:#303030;font-weight:normal;white-space:nowrap;letter-spacing:0.095px;-webkit-text-stroke:0.15px;">11</div><div style="left:162.10px;top:479.00px;font-size:8.4px;line-height:10px;color:#303030;font-weight:normal;white-space:nowrap;letter-spacing:-0.003px;-webkit-text-stroke:0.15px;">Categoria 1</div><div style="left:263.40px;top:479.00px;font-size:8.4px;line-height:10px;color:#303030;font-weight:normal;white-space:nowrap;letter-spacing:0.265px;-webkit-text-stroke:0.15px;">Item 11</div><div style="left:355.20px;top:479.00px;font-size:8.4px;line-height:10px;color:#303030;font-weight:normal;white-space:nowrap;letter-spacing:0.090px;-webkit-text-stroke:0.15px;">Funcionário 3</div><div style="left:432.40px;top:479.00px;font-size:8.4px;line-height:10px;color:#303030;font-weight:normal;white-space:nowrap;letter-spacing:-0.083px;-webkit-text-stroke:0.15px;">Compras</div><div style="left:581.60px;top:479.00px;font-size:8.4px;line-height:10px;color:#303030;font-weight:normal;white-space:nowrap;letter-spacing:0.421px;-webkit-text-stroke:0.15px;">11/04/2023</div><div style="left:642.90px;top:479.00px;font-size:8.4px;line-height:10px;color:#303030;font-weight:normal;white-space:nowrap;letter-spacing:-0.231px;-webkit-text-stroke:0.15px;">8,0</div><div style="left:712.77px;top:479.00px;font-size:8.4px;line-height:10px;color:#303030;font-weight:normal;white-space:nowrap;letter-spacing:-0.247px;-webkit-text-stroke:0.15px;">R$ 470</div><div style="left:766.30px;top:479.00px;font-size:8.4px;line-height:10px;color:#e2efda;font-weight:normal;white-space:nowrap;letter-spacing:-0.126px;-webkit-text-stroke:0.15px;">Bom</div><div style="left:831.00px;top:479.00px;font-size:8.4px;line-height:10px;color:#303030;font-weight:normal;white-space:nowrap;-webkit-text-stroke:0.15px;">1</div><div style="left:885.10px;top:479.00px;font-size:8.4px;line-height:10px;color:#303030;font-weight:normal;white-space:nowrap;letter-spacing:-0.247px;-webkit-text-stroke:0.15px;">R$ 157</div><div style="left:951.10px;top:479.00px;font-size:8.4px;line-height:10px;color:#e2efda;font-weight:normal;white-space:nowrap;letter-spacing:-0.156px;-webkit-text-stroke:0.15px;">Em dia</div><svg style="left:571.40px;top:471.60px;" width="5" height="5" viewBox="0 0 5 5"><path d="M0.3 0.3h4.2L0.3 4.5z" fill="#1e7b3c"/></svg><svg style="left:694.70px;top:471.60px;" width="5" height="5" viewBox="0 0 5 5"><path d="M0.3 0.3h4.2L0.3 4.5z" fill="#1e7b3c"/></svg><div style="left:117.00px;top:506.00px;font-size:8.4px;line-height:10px;color:#303030;font-weight:normal;white-space:nowrap;letter-spacing:-0.493px;-webkit-text-stroke:0.15px;">12</div><div style="left:162.10px;top:506.00px;font-size:8.4px;line-height:10px;color:#303030;font-weight:normal;white-space:nowrap;letter-spacing:-0.003px;-webkit-text-stroke:0.15px;">Categoria 2</div><div style="left:263.40px;top:506.00px;font-size:8.4px;line-height:10px;color:#303030;font-weight:normal;white-space:nowrap;letter-spacing:0.160px;-webkit-text-stroke:0.15px;">Item 12</div><div style="left:355.20px;top:506.00px;font-size:8.4px;line-height:10px;color:#303030;font-weight:normal;white-space:nowrap;letter-spacing:0.090px;-webkit-text-stroke:0.15px;">Funcionário 4</div><div style="left:432.40px;top:506.00px;font-size:8.4px;line-height:10px;color:#303030;font-weight:normal;white-space:nowrap;letter-spacing:0.332px;-webkit-text-stroke:0.15px;">Atendimento</div><div style="left:581.60px;top:506.00px;font-size:8.4px;line-height:10px;color:#303030;font-weight:normal;white-space:nowrap;letter-spacing:0.351px;-webkit-text-stroke:0.15px;">21/04/2023</div><div style="left:642.90px;top:506.00px;font-size:8.4px;line-height:10px;color:#303030;font-weight:normal;white-space:nowrap;letter-spacing:-0.231px;-webkit-text-stroke:0.15px;">8,0</div><div style="left:712.77px;top:506.00px;font-size:8.4px;line-height:10px;color:#303030;font-weight:normal;white-space:nowrap;letter-spacing:-0.247px;-webkit-text-stroke:0.15px;">R$ 472</div><div style="left:766.30px;top:506.00px;font-size:8.4px;line-height:10px;color:#fff2cc;font-weight:normal;white-space:nowrap;letter-spacing:-0.117px;-webkit-text-stroke:0.15px;">Regular</div><div style="left:831.00px;top:506.00px;font-size:8.4px;line-height:10px;color:#303030;font-weight:normal;white-space:nowrap;-webkit-text-stroke:0.15px;">2</div><div style="left:885.10px;top:506.00px;font-size:8.4px;line-height:10px;color:#303030;font-weight:normal;white-space:nowrap;letter-spacing:-0.247px;-webkit-text-stroke:0.15px;">R$ 201</div><div style="left:951.10px;top:506.00px;font-size:8.4px;line-height:10px;color:#e2efda;font-weight:normal;white-space:nowrap;letter-spacing:-0.156px;-webkit-text-stroke:0.15px;">Em dia</div><svg style="left:571.40px;top:497.39px;" width="5" height="5" viewBox="0 0 5 5"><path d="M0.3 0.3h4.2L0.3 4.5z" fill="#1e7b3c"/></svg><svg style="left:694.70px;top:497.39px;" width="5" height="5" viewBox="0 0 5 5"><path d="M0.3 0.3h4.2L0.3 4.5z" fill="#1e7b3c"/></svg>
</body></html>
